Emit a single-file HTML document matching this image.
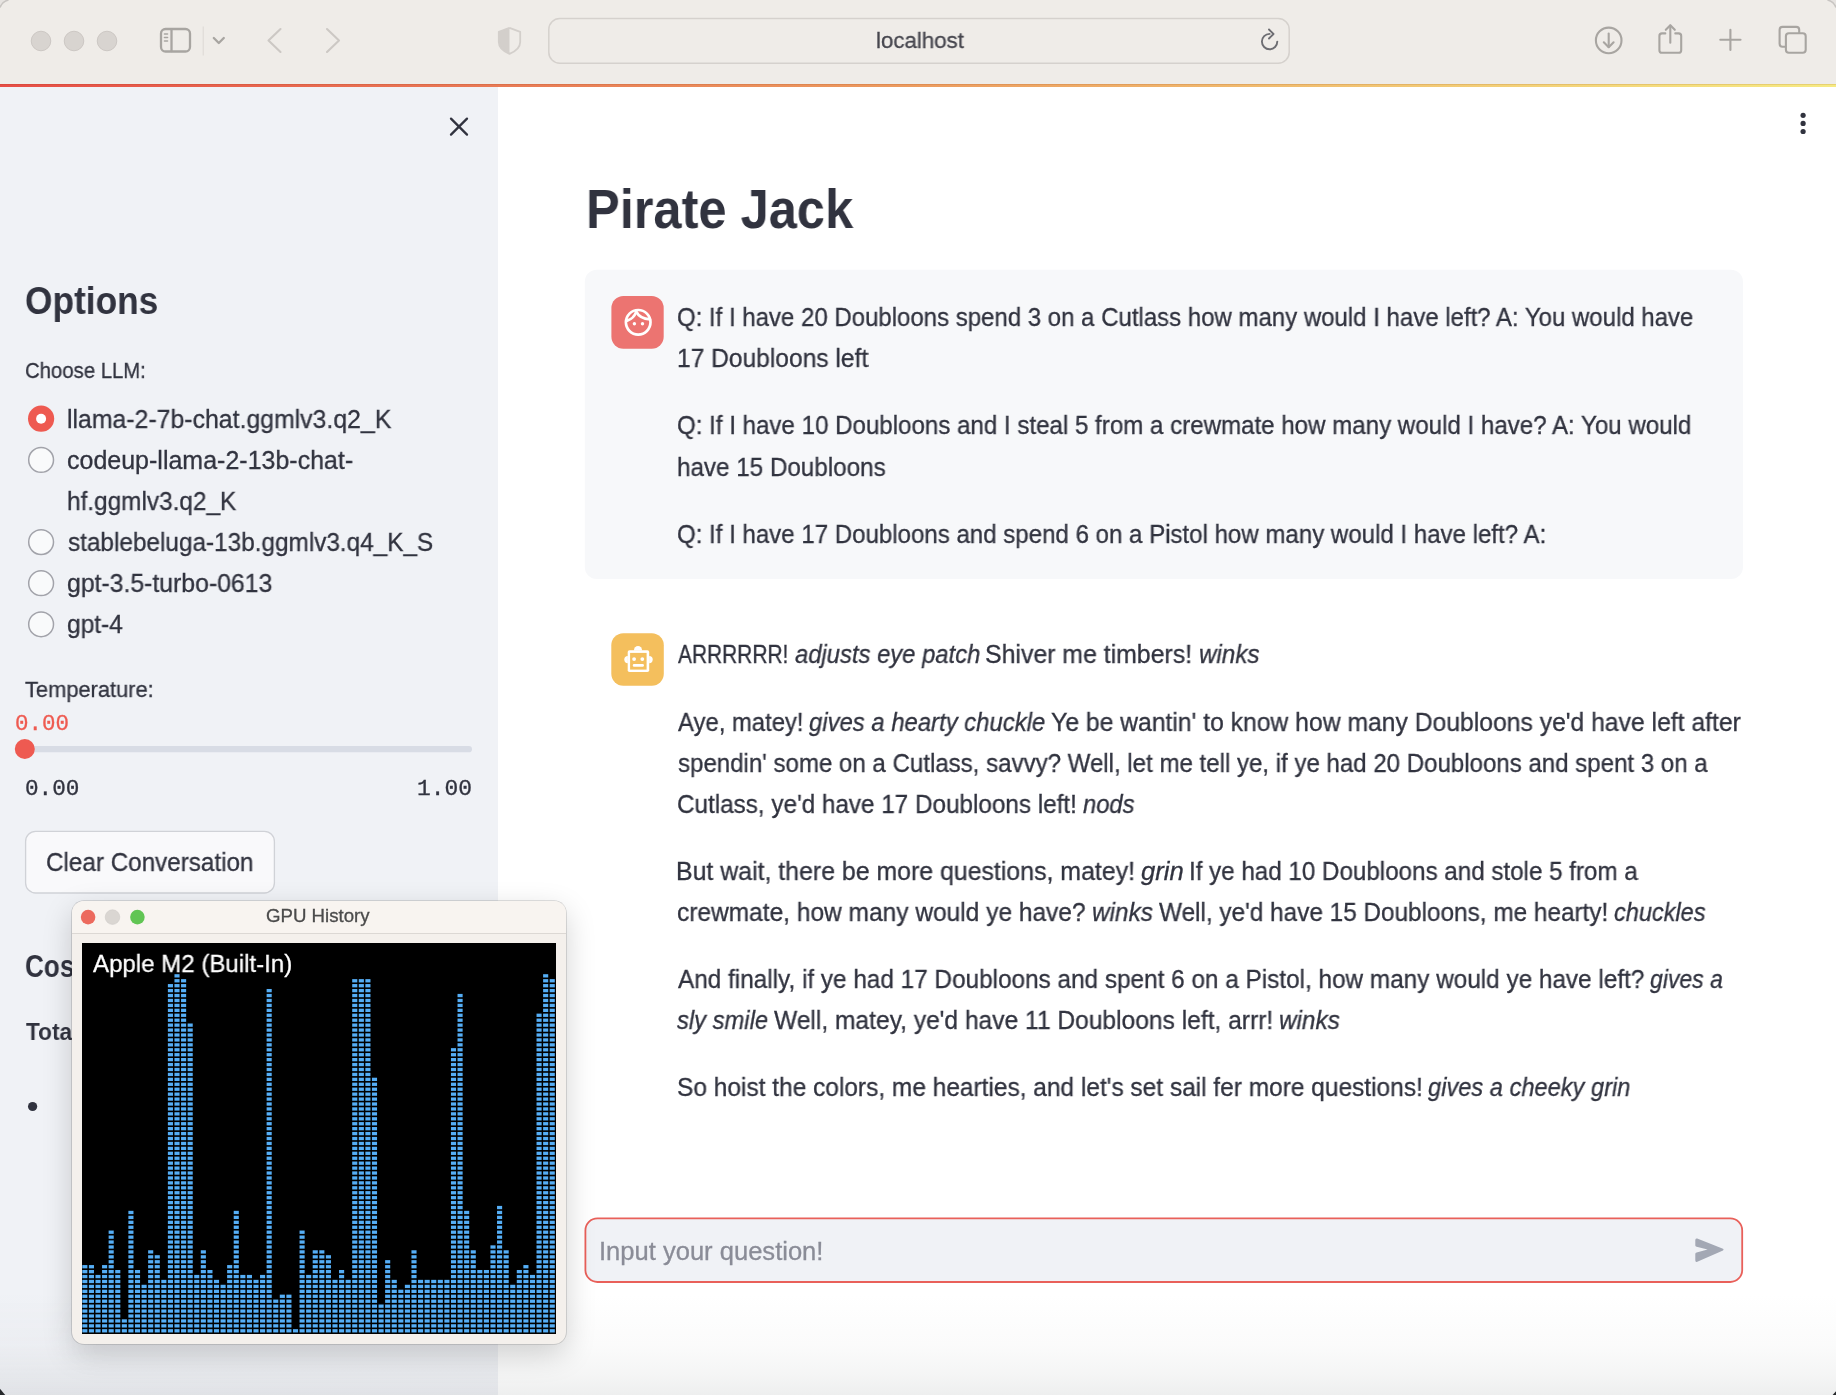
<!DOCTYPE html>
<html><head><meta charset="utf-8">
<style>
html,body{margin:0;padding:0}
body{width:1836px;height:1395px;overflow:hidden;position:relative;background:#fff;font-family:"Liberation Sans",sans-serif}
.t{position:absolute;white-space:nowrap;line-height:0;transform-origin:0 0;will-change:transform;-webkit-text-stroke:0.3px currentColor}
.t i{font-style:italic}
.abs{position:absolute}
</style></head><body>
<!-- toolbar -->
<div class="abs" style="left:0;top:0;width:1836px;height:85px;background:#EFECE8"></div>
<div class="abs" style="left:0;top:84px;width:1836px;height:3px;background:linear-gradient(90deg,#E74E46 0%,#E97A55 27%,#EC9A5E 49%,#F2C874 77%,#F6EA82 100%)"></div>
<div class="abs" style="left:0;top:84px;width:1836px;height:1px;background:rgba(120,40,0,0.12)"></div>
<svg class="abs" style="left:0;top:0" width="1836" height="84" viewBox="0 0 1836 84">
  <g fill="#D8D4D0" stroke="#C6C2BE" stroke-width="0.8">
    <circle cx="41" cy="41" r="9.8"/><circle cx="74" cy="41" r="9.8"/><circle cx="107" cy="41" r="9.8"/>
  </g>
  <g fill="none" stroke="#A8A5A1" stroke-width="2.3" stroke-linecap="round" stroke-linejoin="round">
    <rect x="161" y="29" width="29" height="22.5" rx="4.5"/>
    <line x1="171.5" y1="29.5" x2="171.5" y2="51"/>
    <line x1="164.5" y1="34" x2="167.5" y2="34" stroke-width="1.6"/>
    <line x1="164.5" y1="37.5" x2="167.5" y2="37.5" stroke-width="1.6"/>
    <line x1="164.5" y1="41" x2="167.5" y2="41" stroke-width="1.6"/>
    <polyline points="213.8,38 218.8,43 223.8,38"/>
  </g>
  <line x1="203.2" y1="26.5" x2="203.2" y2="55.5" stroke="#DCD8D4" stroke-width="1"/>
  <g fill="none" stroke="#CCC8C4" stroke-width="2.1" stroke-linecap="round" stroke-linejoin="round">
    <polyline points="280.5,29 268.5,40.5 280.5,52"/>
    <polyline points="327,29 339,40.5 327,52"/>
  </g>
  <path d="M509.5,27.8 L498.8,31.8 L498.8,42 Q498.8,49.5 509.5,53.8 Z" fill="#D3CFCB"/>
  <path d="M509.5,27.8 L520.2,31.8 L520.2,42 Q520.2,49.5 509.5,53.8 L498.8,42 Q498.8,49.5 509.5,53.8 M498.8,42 L498.8,31.8 L509.5,27.8" fill="none" stroke="#D3CFCB" stroke-width="1.8" stroke-linejoin="round"/>
  <rect x="548.8" y="18.6" width="740.4" height="44.6" rx="11" fill="#EFECE8" stroke="#D5D1CD" stroke-width="1.5"/>
  <g fill="none" stroke="#6D6D72" stroke-width="1.9" stroke-linecap="round" stroke-linejoin="round">
    <path d="M1277.3,41.6 A7.7,7.7 0 1 1 1269.6,33.9"/>
    <polyline points="1269,29.5 1273.5,34 1269,38.5"/>
  </g>
  <g fill="none" stroke="#A8A5A1" stroke-width="2.1" stroke-linecap="round" stroke-linejoin="round">
    <circle cx="1608.7" cy="40.4" r="12.8"/>
    <line x1="1608.7" y1="33.5" x2="1608.7" y2="47"/>
    <polyline points="1603.8,42.3 1608.7,47.2 1613.6,42.3"/>
    <path d="M1665.3,33.4 H1662 Q1659.4,33.4 1659.4,36 V50.2 Q1659.4,52.8 1662,52.8 H1678.6 Q1681.2,52.8 1681.2,50.2 V36 Q1681.2,33.4 1678.6,33.4 H1675.3"/>
    <line x1="1670.3" y1="25.5" x2="1670.3" y2="42.8"/>
    <polyline points="1665.8,29.8 1670.3,25.3 1674.8,29.8"/>
    <line x1="1720.3" y1="39.8" x2="1740.5" y2="39.8"/>
    <line x1="1730.4" y1="29.7" x2="1730.4" y2="50"/>
    <path d="M1785.5,46.7 H1782.5 Q1779.6,46.7 1779.6,43.8 V29.8 Q1779.6,26.9 1782.5,26.9 H1796.3 Q1799.2,26.9 1799.2,29.8 V33"/>
    <rect x="1785.9" y="33.2" width="19.8" height="19.6" rx="3"/>
  </g>
  <!-- top corners -->
  <path d="M0,0 H8.5 Q2,1.5 0,7.5 Z" fill="#E6E3E0"/>
  <path d="M8.5,0 Q2,1.5 0,7.5" fill="none" stroke="#C8C5C2" stroke-width="1.6"/>
  <path d="M1836,0 H1827.5 Q1834,1.5 1836,7.5 Z" fill="#E6E3E0"/>
  <path d="M1827.5,0 Q1834,1.5 1836,7.5" fill="none" stroke="#C8C5C2" stroke-width="1.6"/>
</svg>
<!-- sidebar -->
<div class="abs" style="left:0;top:87px;width:498px;height:1308px;background:#F0F2F6"></div>
<svg class="abs" style="left:0;top:87px" width="498" height="1308" viewBox="0 87 498 1308">
  <g stroke="#31333F" stroke-width="2.3" stroke-linecap="round">
    <line x1="451" y1="118.6" x2="467" y2="134.6"/><line x1="467" y1="118.6" x2="451" y2="134.6"/>
  </g>
  <circle cx="41.1" cy="418.7" r="13.1" fill="#EE5A51"/>
  <circle cx="41.1" cy="418.7" r="5" fill="#fff"/>
  <g fill="#F9FAFB" stroke="#A2A3AA" stroke-width="1.5">
    <circle cx="41.1" cy="459.9" r="12.4"/>
    <circle cx="41.1" cy="542.1" r="12.4"/>
    <circle cx="41.1" cy="583.2" r="12.4"/>
    <circle cx="41.1" cy="624.3" r="12.4"/>
  </g>
  <rect x="25" y="746" width="447" height="6.3" rx="3.1" fill="#D8DCE5"/>
  <circle cx="24.8" cy="749" r="10" fill="#EE5A51"/>
  <rect x="25.6" y="831.4" width="248.8" height="61.6" rx="10" fill="#F9F9FB" stroke="#D0D2D7" stroke-width="1.3"/>
  <circle cx="32.6" cy="1106.5" r="4.6" fill="#31333F"/>
</svg>
<!-- main -->
<svg class="abs" style="left:498px;top:87px" width="1338" height="1308" viewBox="498 87 1338 1308">
  <g fill="#31333F"><circle cx="1803.1" cy="115.3" r="2.6"/><circle cx="1803.1" cy="123.4" r="2.6"/><circle cx="1803.1" cy="131.5" r="2.6"/></g>
  <rect x="584.8" y="269.7" width="1158.2" height="309.3" rx="12" fill="#F7F8FA"/>
  <rect x="611.4" y="296.1" width="52.3" height="52.7" rx="12" fill="#EC7471"/>
  <g fill="none" stroke="#fff" stroke-width="2.7" stroke-linecap="round" stroke-linejoin="round">
    <circle cx="638.2" cy="322.3" r="12.3"/>
    <path d="M627.2,320.6 Q633.6,318.8 636.3,311.6 Q639.8,318.8 650,319.3"/>
  </g>
  <g fill="#fff"><circle cx="634.4" cy="323.8" r="1.7"/><circle cx="642.5" cy="323.8" r="1.7"/></g>
  <rect x="611.3" y="633.2" width="52.5" height="52.6" rx="12" fill="#F4BF5D"/>
  <g fill="#fff">
    <path d="M633.9,650.4 A4.1,4.4 0 0 1 642.1,650.4 Z"/>
    <path d="M627.9,656 A3.6,3.6 0 0 0 627.9,663.2 Z"/>
    <path d="M649.1,656 A3.6,3.6 0 0 1 649.1,663.2 Z"/>
    <rect x="627.7" y="650.2" width="21.5" height="21.8" rx="1.8"/>
  </g>
  <rect x="630.1" y="652.9" width="16.5" height="16.7" fill="#F4BF5D"/>
  <g fill="#fff"><circle cx="634.1" cy="659.1" r="1.9"/><circle cx="642.3" cy="659.1" r="1.9"/>
  <rect x="632.8" y="663.9" width="11.1" height="2.9" rx="1.2"/></g>
  <rect x="585.4" y="1218.4" width="1156.8" height="63.6" rx="12" fill="#F0F2F6" stroke="#E9605A" stroke-width="1.8"/>
  <path d="M1697.2,1238.5 Q1695.3,1237.9 1695.3,1240.2 L1695.3,1245.4 Q1695.3,1246.4 1696.6,1246.8 L1707.6,1249.6 L1696.6,1252.5 Q1695.3,1252.9 1695.3,1253.9 L1695.3,1260.3 Q1695.3,1262.6 1697.3,1261.8 L1723,1250.5 Q1724.3,1249.6 1723,1248.8 Z" fill="#A3A8B4"/>
</svg>
<div class="t" style='left:875.71px;top:41.20px;font-size:22.5px;color:#46464E;font-weight:400;font-family:"Liberation Sans";transform:scaleX(0.9904)'>localhost</div>
<div class="t" style='left:24.98px;top:301.06px;font-size:38.5px;color:#31333F;font-weight:700;font-family:"Liberation Sans";transform:scaleX(0.9167);-webkit-text-stroke:0'>Options</div>
<div class="t" style='left:24.58px;top:370.61px;font-size:22.2px;color:#31333F;font-weight:400;font-family:"Liberation Sans";transform:scaleX(0.9160)'>Choose LLM:</div>
<div class="t" style='left:67.41px;top:419.04px;font-size:25px;color:#31333F;font-weight:400;font-family:"Liberation Sans";transform:scaleX(0.9930)'>llama-2-7b-chat.ggmlv3.q2_K</div>
<div class="t" style='left:67.40px;top:459.84px;font-size:25px;color:#31333F;font-weight:400;font-family:"Liberation Sans";transform:scaleX(0.9995)'>codeup-llama-2-13b-chat-</div>
<div class="t" style='left:67.43px;top:500.74px;font-size:25px;color:#31333F;font-weight:400;font-family:"Liberation Sans";transform:scaleX(0.9743)'>hf.ggmlv3.q2_K</div>
<div class="t" style='left:68.40px;top:542.14px;font-size:25px;color:#31333F;font-weight:400;font-family:"Liberation Sans";transform:scaleX(0.9733)'>stablebeluga-13b.ggmlv3.q4_K_S</div>
<div class="t" style='left:67.41px;top:583.14px;font-size:25px;color:#31333F;font-weight:400;font-family:"Liberation Sans";transform:scaleX(0.9913)'>gpt-3.5-turbo-0613</div>
<div class="t" style='left:67.42px;top:624.04px;font-size:25px;color:#31333F;font-weight:400;font-family:"Liberation Sans";transform:scaleX(0.9808)'>gpt-4</div>
<div class="t" style='left:25.00px;top:689.61px;font-size:22.2px;color:#31333F;font-weight:400;font-family:"Liberation Sans";transform:scaleX(0.9849)'>Temperature:</div>
<div class="t" style='left:15.15px;top:723.68px;font-size:21.5px;color:#EE5A50;font-weight:400;font-family:"Liberation Mono";transform:scaleX(1.0461)'>0.00</div>
<div class="t" style='left:24.85px;top:788.78px;font-size:21.5px;color:#31333F;font-weight:400;font-family:"Liberation Mono";transform:scaleX(1.0542)'>0.00</div>
<div class="t" style='left:416.93px;top:788.78px;font-size:21.5px;color:#31333F;font-weight:400;font-family:"Liberation Mono";transform:scaleX(1.0663)'>1.00</div>
<div class="t" style='left:46.03px;top:862.14px;font-size:25px;color:#31333F;font-weight:400;font-family:"Liberation Sans";transform:scaleX(0.9694)'>Clear Conversation</div>
<div class="t" style='left:25.28px;top:966.31px;font-size:32px;color:#31333F;font-weight:700;font-family:"Liberation Sans";transform:scaleX(0.8166);-webkit-text-stroke:0'>Cos</div>
<div class="t" style='left:25.50px;top:1032.18px;font-size:24.3px;color:#31333F;font-weight:700;font-family:"Liberation Sans";transform:scaleX(0.9305);-webkit-text-stroke:0'>Tota</div>
<div class="t" style='left:586.14px;top:209.44px;font-size:55px;color:#31333F;font-weight:700;font-family:"Liberation Sans";transform:scaleX(0.9194);-webkit-text-stroke:0'>Pirate Jack</div>
<div class="t" style='left:677.34px;top:317.14px;font-size:25px;color:#31333F;font-weight:400;font-family:"Liberation Sans";transform:scaleX(0.9597)'>Q: If I have 20 Doubloons spend 3 on a Cutlass how many would I have left? A: You would have</div>
<div class="t" style='left:677.32px;top:358.14px;font-size:25px;color:#31333F;font-weight:400;font-family:"Liberation Sans";transform:scaleX(0.9823)'>17 Doubloons left</div>
<div class="t" style='left:677.34px;top:425.44px;font-size:25px;color:#31333F;font-weight:400;font-family:"Liberation Sans";transform:scaleX(0.9642)'>Q: If I have 10 Doubloons and I steal 5 from a crewmate how many would I have? A: You would</div>
<div class="t" style='left:677.33px;top:466.54px;font-size:25px;color:#31333F;font-weight:400;font-family:"Liberation Sans";transform:scaleX(0.9685)'>have 15 Doubloons</div>
<div class="t" style='left:677.34px;top:534.24px;font-size:25px;color:#31333F;font-weight:400;font-family:"Liberation Sans";transform:scaleX(0.9622)'>Q: If I have 17 Doubloons and spend 6 on a Pistol how many would I have left? A:</div>
<div class="t" style='left:678.30px;top:654.04px;font-size:25px;color:#31333F;font-weight:400;font-family:"Liberation Sans";transform:scaleX(0.8362)'>ARRRRRR!</div>
<div class="t" style='left:794.80px;top:654.04px;font-size:25px;color:#31333F;font-weight:400;font-family:"Liberation Sans";transform:scaleX(0.9522)'><i>adjusts eye patch</i></div>
<div class="t" style='left:985.31px;top:654.04px;font-size:25px;color:#31333F;font-weight:400;font-family:"Liberation Sans";transform:scaleX(0.9935)'>Shiver me timbers!</div>
<div class="t" style='left:1198.73px;top:654.04px;font-size:25px;color:#31333F;font-weight:400;font-family:"Liberation Sans";transform:scaleX(0.9687)'><i>winks</i></div>
<div class="t" style='left:678.30px;top:721.84px;font-size:25px;color:#31333F;font-weight:400;font-family:"Liberation Sans";transform:scaleX(0.9545)'>Aye, matey!</div>
<div class="t" style='left:809.40px;top:721.84px;font-size:25px;color:#31333F;font-weight:400;font-family:"Liberation Sans";transform:scaleX(0.9548)'><i>gives a hearty chuckle</i></div>
<div class="t" style='left:1051.20px;top:721.84px;font-size:25px;color:#31333F;font-weight:400;font-family:"Liberation Sans";transform:scaleX(0.9884)'>Ye be wantin&#x27; to know how many Doubloons ye&#x27;d have left after</div>
<div class="t" style='left:678.30px;top:762.84px;font-size:25px;color:#31333F;font-weight:400;font-family:"Liberation Sans";transform:scaleX(0.9621)'>spendin&#x27; some on a Cutlass, savvy? Well, let me tell ye, if ye had 20 Doubloons and spent 3 on a</div>
<div class="t" style='left:677.33px;top:803.74px;font-size:25px;color:#31333F;font-weight:400;font-family:"Liberation Sans";transform:scaleX(0.9706)'>Cutlass, ye&#x27;d have 17 Doubloons left!</div>
<div class="t" style='left:1083.10px;top:803.74px;font-size:25px;color:#31333F;font-weight:400;font-family:"Liberation Sans";transform:scaleX(0.9495)'><i>nods</i></div>
<div class="t" style='left:676.31px;top:870.84px;font-size:25px;color:#31333F;font-weight:400;font-family:"Liberation Sans";transform:scaleX(0.9948)'>But wait, there be more questions, matey!</div>
<div class="t" style='left:1140.50px;top:870.84px;font-size:25px;color:#31333F;font-weight:400;font-family:"Liberation Sans";transform:scaleX(1.0274)'><i>grin</i></div>
<div class="t" style='left:1188.87px;top:870.84px;font-size:25px;color:#31333F;font-weight:400;font-family:"Liberation Sans";transform:scaleX(0.9667)'>If ye had 10 Doubloons and stole 5 from a</div>
<div class="t" style='left:677.32px;top:911.64px;font-size:25px;color:#31333F;font-weight:400;font-family:"Liberation Sans";transform:scaleX(0.9801)'>crewmate, how many would ye have?</div>
<div class="t" style='left:1091.52px;top:911.64px;font-size:25px;color:#31333F;font-weight:400;font-family:"Liberation Sans";transform:scaleX(0.9752)'><i>winks</i></div>
<div class="t" style='left:1158.60px;top:911.64px;font-size:25px;color:#31333F;font-weight:400;font-family:"Liberation Sans";transform:scaleX(0.9735)'>Well, ye&#x27;d have 15 Doubloons, me hearty!</div>
<div class="t" style='left:1613.90px;top:911.64px;font-size:25px;color:#31333F;font-weight:400;font-family:"Liberation Sans";transform:scaleX(0.9415)'><i>chuckles</i></div>
<div class="t" style='left:678.30px;top:979.34px;font-size:25px;color:#31333F;font-weight:400;font-family:"Liberation Sans";transform:scaleX(0.9730)'>And finally, if ye had 17 Doubloons and spent 6 on a Pistol, how many would ye have left?</div>
<div class="t" style='left:1650.00px;top:979.34px;font-size:25px;color:#31333F;font-weight:400;font-family:"Liberation Sans";transform:scaleX(0.9205)'><i>gives a</i></div>
<div class="t" style='left:676.90px;top:1020.34px;font-size:25px;color:#31333F;font-weight:400;font-family:"Liberation Sans";transform:scaleX(0.9501)'><i>sly smile</i></div>
<div class="t" style='left:773.90px;top:1020.34px;font-size:25px;color:#31333F;font-weight:400;font-family:"Liberation Sans";transform:scaleX(0.9831)'>Well, matey, ye&#x27;d have 11 Doubloons left, arrr!</div>
<div class="t" style='left:1279.03px;top:1020.34px;font-size:25px;color:#31333F;font-weight:400;font-family:"Liberation Sans";transform:scaleX(0.9736)'><i>winks</i></div>
<div class="t" style='left:677.32px;top:1087.34px;font-size:25px;color:#31333F;font-weight:400;font-family:"Liberation Sans";transform:scaleX(0.9786)'>So hoist the colors, me hearties, and let&#x27;s set sail fer more questions!</div>
<div class="t" style='left:1428.40px;top:1087.34px;font-size:25px;color:#31333F;font-weight:400;font-family:"Liberation Sans";transform:scaleX(0.9460)'><i>gives a cheeky grin</i></div>
<div class="t" style='left:598.86px;top:1250.94px;font-size:25px;color:#8A8C97;font-weight:400;font-family:"Liberation Sans";transform:scaleX(1.0220)'>Input your question!</div>
<!-- bottom gradient -->
<div class="abs" style="left:498px;top:1295px;width:1338px;height:100px;background:linear-gradient(180deg,rgba(236,237,237,0) 0%,rgba(236,237,237,0.22) 50%,rgba(236,237,237,0.55) 80%,rgba(236,237,237,0.9) 100%)"></div>
<div class="abs" style="left:0;top:1295px;width:498px;height:100px;background:linear-gradient(180deg,rgba(222,224,228,0) 0%,rgba(222,224,228,0.22) 50%,rgba(222,224,228,0.55) 80%,rgba(222,224,228,0.9) 100%)"></div>
<!-- GPU window -->
<div class="abs" style="left:72px;top:901px;width:493.8px;height:443px;border-radius:12px;box-shadow:0 10px 30px rgba(0,0,0,0.18),0 0 0 0.8px rgba(0,0,0,0.16);background:#F4F0EC;overflow:hidden">
  <div class="abs" style="left:0;top:0;width:100%;height:32px;background:#F8F4F0;border-bottom:1px solid #DCD8D4"></div>
</div>
<svg class="abs" style="left:72px;top:901px" width="495" height="40" viewBox="72 901 495 40">
  <circle cx="88.1" cy="917.1" r="7.3" fill="#EC6A5E"/>
  <circle cx="112.5" cy="917.1" r="7.3" fill="#DAD6D2" stroke="#CFCBC7" stroke-width="0.6"/>
  <circle cx="137.4" cy="917.1" r="7.3" fill="#61C554"/>
</svg>
<svg style="position:absolute;left:82.0px;top:942.5px" width="474.0" height="391.5" viewBox="0 0 474.0 391.5"><rect width="474.0" height="391.5" fill="#000"/><g fill="#55AEF6"><rect x="0.30" y="386.15" width="5.1" height="3.3"/><rect x="0.30" y="381.22" width="5.1" height="3.3"/><rect x="0.30" y="376.29" width="5.1" height="3.3"/><rect x="0.30" y="371.36" width="5.1" height="3.3"/><rect x="0.30" y="366.43" width="5.1" height="3.3"/><rect x="0.30" y="361.50" width="5.1" height="3.3"/><rect x="0.30" y="356.57" width="5.1" height="3.3"/><rect x="0.30" y="351.64" width="5.1" height="3.3"/><rect x="0.30" y="346.71" width="5.1" height="3.3"/><rect x="0.30" y="341.78" width="5.1" height="3.3"/><rect x="0.30" y="336.85" width="5.1" height="3.3"/><rect x="0.30" y="331.92" width="5.1" height="3.3"/><rect x="0.30" y="326.99" width="5.1" height="3.3"/><rect x="0.30" y="322.06" width="5.1" height="3.3"/><rect x="6.88" y="386.15" width="5.1" height="3.3"/><rect x="6.88" y="381.22" width="5.1" height="3.3"/><rect x="6.88" y="376.29" width="5.1" height="3.3"/><rect x="6.88" y="371.36" width="5.1" height="3.3"/><rect x="6.88" y="366.43" width="5.1" height="3.3"/><rect x="6.88" y="361.50" width="5.1" height="3.3"/><rect x="6.88" y="356.57" width="5.1" height="3.3"/><rect x="6.88" y="351.64" width="5.1" height="3.3"/><rect x="6.88" y="346.71" width="5.1" height="3.3"/><rect x="6.88" y="341.78" width="5.1" height="3.3"/><rect x="6.88" y="336.85" width="5.1" height="3.3"/><rect x="6.88" y="331.92" width="5.1" height="3.3"/><rect x="6.88" y="326.99" width="5.1" height="3.3"/><rect x="6.88" y="322.06" width="5.1" height="3.3"/><rect x="13.47" y="386.15" width="5.1" height="3.3"/><rect x="13.47" y="381.22" width="5.1" height="3.3"/><rect x="13.47" y="376.29" width="5.1" height="3.3"/><rect x="13.47" y="371.36" width="5.1" height="3.3"/><rect x="13.47" y="366.43" width="5.1" height="3.3"/><rect x="13.47" y="361.50" width="5.1" height="3.3"/><rect x="13.47" y="356.57" width="5.1" height="3.3"/><rect x="13.47" y="351.64" width="5.1" height="3.3"/><rect x="13.47" y="346.71" width="5.1" height="3.3"/><rect x="13.47" y="341.78" width="5.1" height="3.3"/><rect x="13.47" y="336.85" width="5.1" height="3.3"/><rect x="13.47" y="331.92" width="5.1" height="3.3"/><rect x="20.05" y="386.15" width="5.1" height="3.3"/><rect x="20.05" y="381.22" width="5.1" height="3.3"/><rect x="20.05" y="376.29" width="5.1" height="3.3"/><rect x="20.05" y="371.36" width="5.1" height="3.3"/><rect x="20.05" y="366.43" width="5.1" height="3.3"/><rect x="20.05" y="361.50" width="5.1" height="3.3"/><rect x="20.05" y="356.57" width="5.1" height="3.3"/><rect x="20.05" y="351.64" width="5.1" height="3.3"/><rect x="20.05" y="346.71" width="5.1" height="3.3"/><rect x="20.05" y="341.78" width="5.1" height="3.3"/><rect x="20.05" y="336.85" width="5.1" height="3.3"/><rect x="20.05" y="331.92" width="5.1" height="3.3"/><rect x="20.05" y="326.99" width="5.1" height="3.3"/><rect x="20.05" y="322.06" width="5.1" height="3.3"/><rect x="26.63" y="386.15" width="5.1" height="3.3"/><rect x="26.63" y="381.22" width="5.1" height="3.3"/><rect x="26.63" y="376.29" width="5.1" height="3.3"/><rect x="26.63" y="371.36" width="5.1" height="3.3"/><rect x="26.63" y="366.43" width="5.1" height="3.3"/><rect x="26.63" y="361.50" width="5.1" height="3.3"/><rect x="26.63" y="356.57" width="5.1" height="3.3"/><rect x="26.63" y="351.64" width="5.1" height="3.3"/><rect x="26.63" y="346.71" width="5.1" height="3.3"/><rect x="26.63" y="341.78" width="5.1" height="3.3"/><rect x="26.63" y="336.85" width="5.1" height="3.3"/><rect x="26.63" y="331.92" width="5.1" height="3.3"/><rect x="26.63" y="326.99" width="5.1" height="3.3"/><rect x="26.63" y="322.06" width="5.1" height="3.3"/><rect x="26.63" y="317.13" width="5.1" height="3.3"/><rect x="26.63" y="312.20" width="5.1" height="3.3"/><rect x="26.63" y="307.27" width="5.1" height="3.3"/><rect x="26.63" y="302.34" width="5.1" height="3.3"/><rect x="26.63" y="297.41" width="5.1" height="3.3"/><rect x="26.63" y="292.48" width="5.1" height="3.3"/><rect x="26.63" y="287.55" width="5.1" height="3.3"/><rect x="33.22" y="386.15" width="5.1" height="3.3"/><rect x="33.22" y="381.22" width="5.1" height="3.3"/><rect x="33.22" y="376.29" width="5.1" height="3.3"/><rect x="33.22" y="371.36" width="5.1" height="3.3"/><rect x="33.22" y="366.43" width="5.1" height="3.3"/><rect x="33.22" y="361.50" width="5.1" height="3.3"/><rect x="33.22" y="356.57" width="5.1" height="3.3"/><rect x="33.22" y="351.64" width="5.1" height="3.3"/><rect x="33.22" y="346.71" width="5.1" height="3.3"/><rect x="33.22" y="341.78" width="5.1" height="3.3"/><rect x="33.22" y="336.85" width="5.1" height="3.3"/><rect x="33.22" y="331.92" width="5.1" height="3.3"/><rect x="33.22" y="326.99" width="5.1" height="3.3"/><rect x="39.80" y="386.15" width="5.1" height="3.3"/><rect x="39.80" y="381.22" width="5.1" height="3.3"/><rect x="39.80" y="376.29" width="5.1" height="3.3"/><rect x="46.38" y="386.15" width="5.1" height="3.3"/><rect x="46.38" y="381.22" width="5.1" height="3.3"/><rect x="46.38" y="376.29" width="5.1" height="3.3"/><rect x="46.38" y="371.36" width="5.1" height="3.3"/><rect x="46.38" y="366.43" width="5.1" height="3.3"/><rect x="46.38" y="361.50" width="5.1" height="3.3"/><rect x="46.38" y="356.57" width="5.1" height="3.3"/><rect x="46.38" y="351.64" width="5.1" height="3.3"/><rect x="46.38" y="346.71" width="5.1" height="3.3"/><rect x="46.38" y="341.78" width="5.1" height="3.3"/><rect x="46.38" y="336.85" width="5.1" height="3.3"/><rect x="46.38" y="331.92" width="5.1" height="3.3"/><rect x="46.38" y="326.99" width="5.1" height="3.3"/><rect x="46.38" y="322.06" width="5.1" height="3.3"/><rect x="46.38" y="317.13" width="5.1" height="3.3"/><rect x="46.38" y="312.20" width="5.1" height="3.3"/><rect x="46.38" y="307.27" width="5.1" height="3.3"/><rect x="46.38" y="302.34" width="5.1" height="3.3"/><rect x="46.38" y="297.41" width="5.1" height="3.3"/><rect x="46.38" y="292.48" width="5.1" height="3.3"/><rect x="46.38" y="287.55" width="5.1" height="3.3"/><rect x="46.38" y="282.62" width="5.1" height="3.3"/><rect x="46.38" y="277.69" width="5.1" height="3.3"/><rect x="46.38" y="272.76" width="5.1" height="3.3"/><rect x="46.38" y="267.83" width="5.1" height="3.3"/><rect x="52.96" y="386.15" width="5.1" height="3.3"/><rect x="52.96" y="381.22" width="5.1" height="3.3"/><rect x="52.96" y="376.29" width="5.1" height="3.3"/><rect x="52.96" y="371.36" width="5.1" height="3.3"/><rect x="52.96" y="366.43" width="5.1" height="3.3"/><rect x="52.96" y="361.50" width="5.1" height="3.3"/><rect x="52.96" y="356.57" width="5.1" height="3.3"/><rect x="52.96" y="351.64" width="5.1" height="3.3"/><rect x="52.96" y="346.71" width="5.1" height="3.3"/><rect x="52.96" y="341.78" width="5.1" height="3.3"/><rect x="52.96" y="336.85" width="5.1" height="3.3"/><rect x="52.96" y="331.92" width="5.1" height="3.3"/><rect x="52.96" y="326.99" width="5.1" height="3.3"/><rect x="59.55" y="386.15" width="5.1" height="3.3"/><rect x="59.55" y="381.22" width="5.1" height="3.3"/><rect x="59.55" y="376.29" width="5.1" height="3.3"/><rect x="59.55" y="371.36" width="5.1" height="3.3"/><rect x="59.55" y="366.43" width="5.1" height="3.3"/><rect x="59.55" y="361.50" width="5.1" height="3.3"/><rect x="59.55" y="356.57" width="5.1" height="3.3"/><rect x="59.55" y="351.64" width="5.1" height="3.3"/><rect x="59.55" y="346.71" width="5.1" height="3.3"/><rect x="59.55" y="341.78" width="5.1" height="3.3"/><rect x="66.13" y="386.15" width="5.1" height="3.3"/><rect x="66.13" y="381.22" width="5.1" height="3.3"/><rect x="66.13" y="376.29" width="5.1" height="3.3"/><rect x="66.13" y="371.36" width="5.1" height="3.3"/><rect x="66.13" y="366.43" width="5.1" height="3.3"/><rect x="66.13" y="361.50" width="5.1" height="3.3"/><rect x="66.13" y="356.57" width="5.1" height="3.3"/><rect x="66.13" y="351.64" width="5.1" height="3.3"/><rect x="66.13" y="346.71" width="5.1" height="3.3"/><rect x="66.13" y="341.78" width="5.1" height="3.3"/><rect x="66.13" y="336.85" width="5.1" height="3.3"/><rect x="66.13" y="331.92" width="5.1" height="3.3"/><rect x="66.13" y="326.99" width="5.1" height="3.3"/><rect x="66.13" y="322.06" width="5.1" height="3.3"/><rect x="66.13" y="317.13" width="5.1" height="3.3"/><rect x="66.13" y="312.20" width="5.1" height="3.3"/><rect x="66.13" y="307.27" width="5.1" height="3.3"/><rect x="72.71" y="386.15" width="5.1" height="3.3"/><rect x="72.71" y="381.22" width="5.1" height="3.3"/><rect x="72.71" y="376.29" width="5.1" height="3.3"/><rect x="72.71" y="371.36" width="5.1" height="3.3"/><rect x="72.71" y="366.43" width="5.1" height="3.3"/><rect x="72.71" y="361.50" width="5.1" height="3.3"/><rect x="72.71" y="356.57" width="5.1" height="3.3"/><rect x="72.71" y="351.64" width="5.1" height="3.3"/><rect x="72.71" y="346.71" width="5.1" height="3.3"/><rect x="72.71" y="341.78" width="5.1" height="3.3"/><rect x="72.71" y="336.85" width="5.1" height="3.3"/><rect x="72.71" y="331.92" width="5.1" height="3.3"/><rect x="72.71" y="326.99" width="5.1" height="3.3"/><rect x="72.71" y="322.06" width="5.1" height="3.3"/><rect x="72.71" y="317.13" width="5.1" height="3.3"/><rect x="72.71" y="312.20" width="5.1" height="3.3"/><rect x="79.30" y="386.15" width="5.1" height="3.3"/><rect x="79.30" y="381.22" width="5.1" height="3.3"/><rect x="79.30" y="376.29" width="5.1" height="3.3"/><rect x="79.30" y="371.36" width="5.1" height="3.3"/><rect x="79.30" y="366.43" width="5.1" height="3.3"/><rect x="79.30" y="361.50" width="5.1" height="3.3"/><rect x="79.30" y="356.57" width="5.1" height="3.3"/><rect x="79.30" y="351.64" width="5.1" height="3.3"/><rect x="79.30" y="346.71" width="5.1" height="3.3"/><rect x="79.30" y="341.78" width="5.1" height="3.3"/><rect x="79.30" y="336.85" width="5.1" height="3.3"/><rect x="85.88" y="386.15" width="5.1" height="3.3"/><rect x="85.88" y="381.22" width="5.1" height="3.3"/><rect x="85.88" y="376.29" width="5.1" height="3.3"/><rect x="85.88" y="371.36" width="5.1" height="3.3"/><rect x="85.88" y="366.43" width="5.1" height="3.3"/><rect x="85.88" y="361.50" width="5.1" height="3.3"/><rect x="85.88" y="356.57" width="5.1" height="3.3"/><rect x="85.88" y="351.64" width="5.1" height="3.3"/><rect x="85.88" y="346.71" width="5.1" height="3.3"/><rect x="85.88" y="341.78" width="5.1" height="3.3"/><rect x="85.88" y="336.85" width="5.1" height="3.3"/><rect x="85.88" y="331.92" width="5.1" height="3.3"/><rect x="85.88" y="326.99" width="5.1" height="3.3"/><rect x="85.88" y="322.06" width="5.1" height="3.3"/><rect x="85.88" y="317.13" width="5.1" height="3.3"/><rect x="85.88" y="312.20" width="5.1" height="3.3"/><rect x="85.88" y="307.27" width="5.1" height="3.3"/><rect x="85.88" y="302.34" width="5.1" height="3.3"/><rect x="85.88" y="297.41" width="5.1" height="3.3"/><rect x="85.88" y="292.48" width="5.1" height="3.3"/><rect x="85.88" y="287.55" width="5.1" height="3.3"/><rect x="85.88" y="282.62" width="5.1" height="3.3"/><rect x="85.88" y="277.69" width="5.1" height="3.3"/><rect x="85.88" y="272.76" width="5.1" height="3.3"/><rect x="85.88" y="267.83" width="5.1" height="3.3"/><rect x="85.88" y="262.90" width="5.1" height="3.3"/><rect x="85.88" y="257.97" width="5.1" height="3.3"/><rect x="85.88" y="253.04" width="5.1" height="3.3"/><rect x="85.88" y="248.11" width="5.1" height="3.3"/><rect x="85.88" y="243.18" width="5.1" height="3.3"/><rect x="85.88" y="238.25" width="5.1" height="3.3"/><rect x="85.88" y="233.32" width="5.1" height="3.3"/><rect x="85.88" y="228.39" width="5.1" height="3.3"/><rect x="85.88" y="223.46" width="5.1" height="3.3"/><rect x="85.88" y="218.53" width="5.1" height="3.3"/><rect x="85.88" y="213.60" width="5.1" height="3.3"/><rect x="85.88" y="208.67" width="5.1" height="3.3"/><rect x="85.88" y="203.74" width="5.1" height="3.3"/><rect x="85.88" y="198.81" width="5.1" height="3.3"/><rect x="85.88" y="193.88" width="5.1" height="3.3"/><rect x="85.88" y="188.95" width="5.1" height="3.3"/><rect x="85.88" y="184.02" width="5.1" height="3.3"/><rect x="85.88" y="179.09" width="5.1" height="3.3"/><rect x="85.88" y="174.16" width="5.1" height="3.3"/><rect x="85.88" y="169.23" width="5.1" height="3.3"/><rect x="85.88" y="164.30" width="5.1" height="3.3"/><rect x="85.88" y="159.37" width="5.1" height="3.3"/><rect x="85.88" y="154.44" width="5.1" height="3.3"/><rect x="85.88" y="149.51" width="5.1" height="3.3"/><rect x="85.88" y="144.58" width="5.1" height="3.3"/><rect x="85.88" y="139.65" width="5.1" height="3.3"/><rect x="85.88" y="134.72" width="5.1" height="3.3"/><rect x="85.88" y="129.79" width="5.1" height="3.3"/><rect x="85.88" y="124.86" width="5.1" height="3.3"/><rect x="85.88" y="119.93" width="5.1" height="3.3"/><rect x="85.88" y="115.00" width="5.1" height="3.3"/><rect x="85.88" y="110.07" width="5.1" height="3.3"/><rect x="85.88" y="105.14" width="5.1" height="3.3"/><rect x="85.88" y="100.21" width="5.1" height="3.3"/><rect x="85.88" y="95.28" width="5.1" height="3.3"/><rect x="85.88" y="90.35" width="5.1" height="3.3"/><rect x="85.88" y="85.42" width="5.1" height="3.3"/><rect x="85.88" y="80.49" width="5.1" height="3.3"/><rect x="85.88" y="75.56" width="5.1" height="3.3"/><rect x="85.88" y="70.63" width="5.1" height="3.3"/><rect x="85.88" y="65.70" width="5.1" height="3.3"/><rect x="85.88" y="60.77" width="5.1" height="3.3"/><rect x="85.88" y="55.84" width="5.1" height="3.3"/><rect x="85.88" y="50.91" width="5.1" height="3.3"/><rect x="85.88" y="45.98" width="5.1" height="3.3"/><rect x="85.88" y="41.05" width="5.1" height="3.3"/><rect x="92.46" y="386.15" width="5.1" height="3.3"/><rect x="92.46" y="381.22" width="5.1" height="3.3"/><rect x="92.46" y="376.29" width="5.1" height="3.3"/><rect x="92.46" y="371.36" width="5.1" height="3.3"/><rect x="92.46" y="366.43" width="5.1" height="3.3"/><rect x="92.46" y="361.50" width="5.1" height="3.3"/><rect x="92.46" y="356.57" width="5.1" height="3.3"/><rect x="92.46" y="351.64" width="5.1" height="3.3"/><rect x="92.46" y="346.71" width="5.1" height="3.3"/><rect x="92.46" y="341.78" width="5.1" height="3.3"/><rect x="92.46" y="336.85" width="5.1" height="3.3"/><rect x="92.46" y="331.92" width="5.1" height="3.3"/><rect x="92.46" y="326.99" width="5.1" height="3.3"/><rect x="92.46" y="322.06" width="5.1" height="3.3"/><rect x="92.46" y="317.13" width="5.1" height="3.3"/><rect x="92.46" y="312.20" width="5.1" height="3.3"/><rect x="92.46" y="307.27" width="5.1" height="3.3"/><rect x="92.46" y="302.34" width="5.1" height="3.3"/><rect x="92.46" y="297.41" width="5.1" height="3.3"/><rect x="92.46" y="292.48" width="5.1" height="3.3"/><rect x="92.46" y="287.55" width="5.1" height="3.3"/><rect x="92.46" y="282.62" width="5.1" height="3.3"/><rect x="92.46" y="277.69" width="5.1" height="3.3"/><rect x="92.46" y="272.76" width="5.1" height="3.3"/><rect x="92.46" y="267.83" width="5.1" height="3.3"/><rect x="92.46" y="262.90" width="5.1" height="3.3"/><rect x="92.46" y="257.97" width="5.1" height="3.3"/><rect x="92.46" y="253.04" width="5.1" height="3.3"/><rect x="92.46" y="248.11" width="5.1" height="3.3"/><rect x="92.46" y="243.18" width="5.1" height="3.3"/><rect x="92.46" y="238.25" width="5.1" height="3.3"/><rect x="92.46" y="233.32" width="5.1" height="3.3"/><rect x="92.46" y="228.39" width="5.1" height="3.3"/><rect x="92.46" y="223.46" width="5.1" height="3.3"/><rect x="92.46" y="218.53" width="5.1" height="3.3"/><rect x="92.46" y="213.60" width="5.1" height="3.3"/><rect x="92.46" y="208.67" width="5.1" height="3.3"/><rect x="92.46" y="203.74" width="5.1" height="3.3"/><rect x="92.46" y="198.81" width="5.1" height="3.3"/><rect x="92.46" y="193.88" width="5.1" height="3.3"/><rect x="92.46" y="188.95" width="5.1" height="3.3"/><rect x="92.46" y="184.02" width="5.1" height="3.3"/><rect x="92.46" y="179.09" width="5.1" height="3.3"/><rect x="92.46" y="174.16" width="5.1" height="3.3"/><rect x="92.46" y="169.23" width="5.1" height="3.3"/><rect x="92.46" y="164.30" width="5.1" height="3.3"/><rect x="92.46" y="159.37" width="5.1" height="3.3"/><rect x="92.46" y="154.44" width="5.1" height="3.3"/><rect x="92.46" y="149.51" width="5.1" height="3.3"/><rect x="92.46" y="144.58" width="5.1" height="3.3"/><rect x="92.46" y="139.65" width="5.1" height="3.3"/><rect x="92.46" y="134.72" width="5.1" height="3.3"/><rect x="92.46" y="129.79" width="5.1" height="3.3"/><rect x="92.46" y="124.86" width="5.1" height="3.3"/><rect x="92.46" y="119.93" width="5.1" height="3.3"/><rect x="92.46" y="115.00" width="5.1" height="3.3"/><rect x="92.46" y="110.07" width="5.1" height="3.3"/><rect x="92.46" y="105.14" width="5.1" height="3.3"/><rect x="92.46" y="100.21" width="5.1" height="3.3"/><rect x="92.46" y="95.28" width="5.1" height="3.3"/><rect x="92.46" y="90.35" width="5.1" height="3.3"/><rect x="92.46" y="85.42" width="5.1" height="3.3"/><rect x="92.46" y="80.49" width="5.1" height="3.3"/><rect x="92.46" y="75.56" width="5.1" height="3.3"/><rect x="92.46" y="70.63" width="5.1" height="3.3"/><rect x="92.46" y="65.70" width="5.1" height="3.3"/><rect x="92.46" y="60.77" width="5.1" height="3.3"/><rect x="92.46" y="55.84" width="5.1" height="3.3"/><rect x="92.46" y="50.91" width="5.1" height="3.3"/><rect x="92.46" y="45.98" width="5.1" height="3.3"/><rect x="92.46" y="41.05" width="5.1" height="3.3"/><rect x="92.46" y="36.12" width="5.1" height="3.3"/><rect x="92.46" y="31.19" width="5.1" height="3.3"/><rect x="99.05" y="386.15" width="5.1" height="3.3"/><rect x="99.05" y="381.22" width="5.1" height="3.3"/><rect x="99.05" y="376.29" width="5.1" height="3.3"/><rect x="99.05" y="371.36" width="5.1" height="3.3"/><rect x="99.05" y="366.43" width="5.1" height="3.3"/><rect x="99.05" y="361.50" width="5.1" height="3.3"/><rect x="99.05" y="356.57" width="5.1" height="3.3"/><rect x="99.05" y="351.64" width="5.1" height="3.3"/><rect x="99.05" y="346.71" width="5.1" height="3.3"/><rect x="99.05" y="341.78" width="5.1" height="3.3"/><rect x="99.05" y="336.85" width="5.1" height="3.3"/><rect x="99.05" y="331.92" width="5.1" height="3.3"/><rect x="99.05" y="326.99" width="5.1" height="3.3"/><rect x="99.05" y="322.06" width="5.1" height="3.3"/><rect x="99.05" y="317.13" width="5.1" height="3.3"/><rect x="99.05" y="312.20" width="5.1" height="3.3"/><rect x="99.05" y="307.27" width="5.1" height="3.3"/><rect x="99.05" y="302.34" width="5.1" height="3.3"/><rect x="99.05" y="297.41" width="5.1" height="3.3"/><rect x="99.05" y="292.48" width="5.1" height="3.3"/><rect x="99.05" y="287.55" width="5.1" height="3.3"/><rect x="99.05" y="282.62" width="5.1" height="3.3"/><rect x="99.05" y="277.69" width="5.1" height="3.3"/><rect x="99.05" y="272.76" width="5.1" height="3.3"/><rect x="99.05" y="267.83" width="5.1" height="3.3"/><rect x="99.05" y="262.90" width="5.1" height="3.3"/><rect x="99.05" y="257.97" width="5.1" height="3.3"/><rect x="99.05" y="253.04" width="5.1" height="3.3"/><rect x="99.05" y="248.11" width="5.1" height="3.3"/><rect x="99.05" y="243.18" width="5.1" height="3.3"/><rect x="99.05" y="238.25" width="5.1" height="3.3"/><rect x="99.05" y="233.32" width="5.1" height="3.3"/><rect x="99.05" y="228.39" width="5.1" height="3.3"/><rect x="99.05" y="223.46" width="5.1" height="3.3"/><rect x="99.05" y="218.53" width="5.1" height="3.3"/><rect x="99.05" y="213.60" width="5.1" height="3.3"/><rect x="99.05" y="208.67" width="5.1" height="3.3"/><rect x="99.05" y="203.74" width="5.1" height="3.3"/><rect x="99.05" y="198.81" width="5.1" height="3.3"/><rect x="99.05" y="193.88" width="5.1" height="3.3"/><rect x="99.05" y="188.95" width="5.1" height="3.3"/><rect x="99.05" y="184.02" width="5.1" height="3.3"/><rect x="99.05" y="179.09" width="5.1" height="3.3"/><rect x="99.05" y="174.16" width="5.1" height="3.3"/><rect x="99.05" y="169.23" width="5.1" height="3.3"/><rect x="99.05" y="164.30" width="5.1" height="3.3"/><rect x="99.05" y="159.37" width="5.1" height="3.3"/><rect x="99.05" y="154.44" width="5.1" height="3.3"/><rect x="99.05" y="149.51" width="5.1" height="3.3"/><rect x="99.05" y="144.58" width="5.1" height="3.3"/><rect x="99.05" y="139.65" width="5.1" height="3.3"/><rect x="99.05" y="134.72" width="5.1" height="3.3"/><rect x="99.05" y="129.79" width="5.1" height="3.3"/><rect x="99.05" y="124.86" width="5.1" height="3.3"/><rect x="99.05" y="119.93" width="5.1" height="3.3"/><rect x="99.05" y="115.00" width="5.1" height="3.3"/><rect x="99.05" y="110.07" width="5.1" height="3.3"/><rect x="99.05" y="105.14" width="5.1" height="3.3"/><rect x="99.05" y="100.21" width="5.1" height="3.3"/><rect x="99.05" y="95.28" width="5.1" height="3.3"/><rect x="99.05" y="90.35" width="5.1" height="3.3"/><rect x="99.05" y="85.42" width="5.1" height="3.3"/><rect x="99.05" y="80.49" width="5.1" height="3.3"/><rect x="99.05" y="75.56" width="5.1" height="3.3"/><rect x="99.05" y="70.63" width="5.1" height="3.3"/><rect x="99.05" y="65.70" width="5.1" height="3.3"/><rect x="99.05" y="60.77" width="5.1" height="3.3"/><rect x="99.05" y="55.84" width="5.1" height="3.3"/><rect x="99.05" y="50.91" width="5.1" height="3.3"/><rect x="99.05" y="45.98" width="5.1" height="3.3"/><rect x="99.05" y="41.05" width="5.1" height="3.3"/><rect x="99.05" y="36.12" width="5.1" height="3.3"/><rect x="105.63" y="386.15" width="5.1" height="3.3"/><rect x="105.63" y="381.22" width="5.1" height="3.3"/><rect x="105.63" y="376.29" width="5.1" height="3.3"/><rect x="105.63" y="371.36" width="5.1" height="3.3"/><rect x="105.63" y="366.43" width="5.1" height="3.3"/><rect x="105.63" y="361.50" width="5.1" height="3.3"/><rect x="105.63" y="356.57" width="5.1" height="3.3"/><rect x="105.63" y="351.64" width="5.1" height="3.3"/><rect x="105.63" y="346.71" width="5.1" height="3.3"/><rect x="105.63" y="341.78" width="5.1" height="3.3"/><rect x="105.63" y="336.85" width="5.1" height="3.3"/><rect x="105.63" y="331.92" width="5.1" height="3.3"/><rect x="105.63" y="326.99" width="5.1" height="3.3"/><rect x="105.63" y="322.06" width="5.1" height="3.3"/><rect x="105.63" y="317.13" width="5.1" height="3.3"/><rect x="105.63" y="312.20" width="5.1" height="3.3"/><rect x="105.63" y="307.27" width="5.1" height="3.3"/><rect x="105.63" y="302.34" width="5.1" height="3.3"/><rect x="105.63" y="297.41" width="5.1" height="3.3"/><rect x="105.63" y="292.48" width="5.1" height="3.3"/><rect x="105.63" y="287.55" width="5.1" height="3.3"/><rect x="105.63" y="282.62" width="5.1" height="3.3"/><rect x="105.63" y="277.69" width="5.1" height="3.3"/><rect x="105.63" y="272.76" width="5.1" height="3.3"/><rect x="105.63" y="267.83" width="5.1" height="3.3"/><rect x="105.63" y="262.90" width="5.1" height="3.3"/><rect x="105.63" y="257.97" width="5.1" height="3.3"/><rect x="105.63" y="253.04" width="5.1" height="3.3"/><rect x="105.63" y="248.11" width="5.1" height="3.3"/><rect x="105.63" y="243.18" width="5.1" height="3.3"/><rect x="105.63" y="238.25" width="5.1" height="3.3"/><rect x="105.63" y="233.32" width="5.1" height="3.3"/><rect x="105.63" y="228.39" width="5.1" height="3.3"/><rect x="105.63" y="223.46" width="5.1" height="3.3"/><rect x="105.63" y="218.53" width="5.1" height="3.3"/><rect x="105.63" y="213.60" width="5.1" height="3.3"/><rect x="105.63" y="208.67" width="5.1" height="3.3"/><rect x="105.63" y="203.74" width="5.1" height="3.3"/><rect x="105.63" y="198.81" width="5.1" height="3.3"/><rect x="105.63" y="193.88" width="5.1" height="3.3"/><rect x="105.63" y="188.95" width="5.1" height="3.3"/><rect x="105.63" y="184.02" width="5.1" height="3.3"/><rect x="105.63" y="179.09" width="5.1" height="3.3"/><rect x="105.63" y="174.16" width="5.1" height="3.3"/><rect x="105.63" y="169.23" width="5.1" height="3.3"/><rect x="105.63" y="164.30" width="5.1" height="3.3"/><rect x="105.63" y="159.37" width="5.1" height="3.3"/><rect x="105.63" y="154.44" width="5.1" height="3.3"/><rect x="105.63" y="149.51" width="5.1" height="3.3"/><rect x="105.63" y="144.58" width="5.1" height="3.3"/><rect x="105.63" y="139.65" width="5.1" height="3.3"/><rect x="105.63" y="134.72" width="5.1" height="3.3"/><rect x="105.63" y="129.79" width="5.1" height="3.3"/><rect x="105.63" y="124.86" width="5.1" height="3.3"/><rect x="105.63" y="119.93" width="5.1" height="3.3"/><rect x="105.63" y="115.00" width="5.1" height="3.3"/><rect x="105.63" y="110.07" width="5.1" height="3.3"/><rect x="105.63" y="105.14" width="5.1" height="3.3"/><rect x="105.63" y="100.21" width="5.1" height="3.3"/><rect x="105.63" y="95.28" width="5.1" height="3.3"/><rect x="105.63" y="90.35" width="5.1" height="3.3"/><rect x="105.63" y="85.42" width="5.1" height="3.3"/><rect x="105.63" y="80.49" width="5.1" height="3.3"/><rect x="112.21" y="386.15" width="5.1" height="3.3"/><rect x="112.21" y="381.22" width="5.1" height="3.3"/><rect x="112.21" y="376.29" width="5.1" height="3.3"/><rect x="112.21" y="371.36" width="5.1" height="3.3"/><rect x="112.21" y="366.43" width="5.1" height="3.3"/><rect x="112.21" y="361.50" width="5.1" height="3.3"/><rect x="112.21" y="356.57" width="5.1" height="3.3"/><rect x="112.21" y="351.64" width="5.1" height="3.3"/><rect x="112.21" y="346.71" width="5.1" height="3.3"/><rect x="112.21" y="341.78" width="5.1" height="3.3"/><rect x="112.21" y="336.85" width="5.1" height="3.3"/><rect x="112.21" y="331.92" width="5.1" height="3.3"/><rect x="118.79" y="386.15" width="5.1" height="3.3"/><rect x="118.79" y="381.22" width="5.1" height="3.3"/><rect x="118.79" y="376.29" width="5.1" height="3.3"/><rect x="118.79" y="371.36" width="5.1" height="3.3"/><rect x="118.79" y="366.43" width="5.1" height="3.3"/><rect x="118.79" y="361.50" width="5.1" height="3.3"/><rect x="118.79" y="356.57" width="5.1" height="3.3"/><rect x="118.79" y="351.64" width="5.1" height="3.3"/><rect x="118.79" y="346.71" width="5.1" height="3.3"/><rect x="118.79" y="341.78" width="5.1" height="3.3"/><rect x="118.79" y="336.85" width="5.1" height="3.3"/><rect x="118.79" y="331.92" width="5.1" height="3.3"/><rect x="118.79" y="326.99" width="5.1" height="3.3"/><rect x="118.79" y="322.06" width="5.1" height="3.3"/><rect x="118.79" y="317.13" width="5.1" height="3.3"/><rect x="118.79" y="312.20" width="5.1" height="3.3"/><rect x="118.79" y="307.27" width="5.1" height="3.3"/><rect x="125.38" y="386.15" width="5.1" height="3.3"/><rect x="125.38" y="381.22" width="5.1" height="3.3"/><rect x="125.38" y="376.29" width="5.1" height="3.3"/><rect x="125.38" y="371.36" width="5.1" height="3.3"/><rect x="125.38" y="366.43" width="5.1" height="3.3"/><rect x="125.38" y="361.50" width="5.1" height="3.3"/><rect x="125.38" y="356.57" width="5.1" height="3.3"/><rect x="125.38" y="351.64" width="5.1" height="3.3"/><rect x="125.38" y="346.71" width="5.1" height="3.3"/><rect x="125.38" y="341.78" width="5.1" height="3.3"/><rect x="125.38" y="336.85" width="5.1" height="3.3"/><rect x="125.38" y="331.92" width="5.1" height="3.3"/><rect x="125.38" y="326.99" width="5.1" height="3.3"/><rect x="131.96" y="386.15" width="5.1" height="3.3"/><rect x="131.96" y="381.22" width="5.1" height="3.3"/><rect x="131.96" y="376.29" width="5.1" height="3.3"/><rect x="131.96" y="371.36" width="5.1" height="3.3"/><rect x="131.96" y="366.43" width="5.1" height="3.3"/><rect x="131.96" y="361.50" width="5.1" height="3.3"/><rect x="131.96" y="356.57" width="5.1" height="3.3"/><rect x="131.96" y="351.64" width="5.1" height="3.3"/><rect x="131.96" y="346.71" width="5.1" height="3.3"/><rect x="131.96" y="341.78" width="5.1" height="3.3"/><rect x="131.96" y="336.85" width="5.1" height="3.3"/><rect x="138.54" y="386.15" width="5.1" height="3.3"/><rect x="138.54" y="381.22" width="5.1" height="3.3"/><rect x="138.54" y="376.29" width="5.1" height="3.3"/><rect x="138.54" y="371.36" width="5.1" height="3.3"/><rect x="138.54" y="366.43" width="5.1" height="3.3"/><rect x="138.54" y="361.50" width="5.1" height="3.3"/><rect x="138.54" y="356.57" width="5.1" height="3.3"/><rect x="138.54" y="351.64" width="5.1" height="3.3"/><rect x="138.54" y="346.71" width="5.1" height="3.3"/><rect x="138.54" y="341.78" width="5.1" height="3.3"/><rect x="145.13" y="386.15" width="5.1" height="3.3"/><rect x="145.13" y="381.22" width="5.1" height="3.3"/><rect x="145.13" y="376.29" width="5.1" height="3.3"/><rect x="145.13" y="371.36" width="5.1" height="3.3"/><rect x="145.13" y="366.43" width="5.1" height="3.3"/><rect x="145.13" y="361.50" width="5.1" height="3.3"/><rect x="145.13" y="356.57" width="5.1" height="3.3"/><rect x="145.13" y="351.64" width="5.1" height="3.3"/><rect x="145.13" y="346.71" width="5.1" height="3.3"/><rect x="145.13" y="341.78" width="5.1" height="3.3"/><rect x="145.13" y="336.85" width="5.1" height="3.3"/><rect x="145.13" y="331.92" width="5.1" height="3.3"/><rect x="145.13" y="326.99" width="5.1" height="3.3"/><rect x="145.13" y="322.06" width="5.1" height="3.3"/><rect x="151.71" y="386.15" width="5.1" height="3.3"/><rect x="151.71" y="381.22" width="5.1" height="3.3"/><rect x="151.71" y="376.29" width="5.1" height="3.3"/><rect x="151.71" y="371.36" width="5.1" height="3.3"/><rect x="151.71" y="366.43" width="5.1" height="3.3"/><rect x="151.71" y="361.50" width="5.1" height="3.3"/><rect x="151.71" y="356.57" width="5.1" height="3.3"/><rect x="151.71" y="351.64" width="5.1" height="3.3"/><rect x="151.71" y="346.71" width="5.1" height="3.3"/><rect x="151.71" y="341.78" width="5.1" height="3.3"/><rect x="151.71" y="336.85" width="5.1" height="3.3"/><rect x="151.71" y="331.92" width="5.1" height="3.3"/><rect x="151.71" y="326.99" width="5.1" height="3.3"/><rect x="151.71" y="322.06" width="5.1" height="3.3"/><rect x="151.71" y="317.13" width="5.1" height="3.3"/><rect x="151.71" y="312.20" width="5.1" height="3.3"/><rect x="151.71" y="307.27" width="5.1" height="3.3"/><rect x="151.71" y="302.34" width="5.1" height="3.3"/><rect x="151.71" y="297.41" width="5.1" height="3.3"/><rect x="151.71" y="292.48" width="5.1" height="3.3"/><rect x="151.71" y="287.55" width="5.1" height="3.3"/><rect x="151.71" y="282.62" width="5.1" height="3.3"/><rect x="151.71" y="277.69" width="5.1" height="3.3"/><rect x="151.71" y="272.76" width="5.1" height="3.3"/><rect x="151.71" y="267.83" width="5.1" height="3.3"/><rect x="158.29" y="386.15" width="5.1" height="3.3"/><rect x="158.29" y="381.22" width="5.1" height="3.3"/><rect x="158.29" y="376.29" width="5.1" height="3.3"/><rect x="158.29" y="371.36" width="5.1" height="3.3"/><rect x="158.29" y="366.43" width="5.1" height="3.3"/><rect x="158.29" y="361.50" width="5.1" height="3.3"/><rect x="158.29" y="356.57" width="5.1" height="3.3"/><rect x="158.29" y="351.64" width="5.1" height="3.3"/><rect x="158.29" y="346.71" width="5.1" height="3.3"/><rect x="158.29" y="341.78" width="5.1" height="3.3"/><rect x="158.29" y="336.85" width="5.1" height="3.3"/><rect x="158.29" y="331.92" width="5.1" height="3.3"/><rect x="164.88" y="386.15" width="5.1" height="3.3"/><rect x="164.88" y="381.22" width="5.1" height="3.3"/><rect x="164.88" y="376.29" width="5.1" height="3.3"/><rect x="164.88" y="371.36" width="5.1" height="3.3"/><rect x="164.88" y="366.43" width="5.1" height="3.3"/><rect x="164.88" y="361.50" width="5.1" height="3.3"/><rect x="164.88" y="356.57" width="5.1" height="3.3"/><rect x="164.88" y="351.64" width="5.1" height="3.3"/><rect x="164.88" y="346.71" width="5.1" height="3.3"/><rect x="164.88" y="341.78" width="5.1" height="3.3"/><rect x="164.88" y="336.85" width="5.1" height="3.3"/><rect x="164.88" y="331.92" width="5.1" height="3.3"/><rect x="171.46" y="386.15" width="5.1" height="3.3"/><rect x="171.46" y="381.22" width="5.1" height="3.3"/><rect x="171.46" y="376.29" width="5.1" height="3.3"/><rect x="171.46" y="371.36" width="5.1" height="3.3"/><rect x="171.46" y="366.43" width="5.1" height="3.3"/><rect x="171.46" y="361.50" width="5.1" height="3.3"/><rect x="171.46" y="356.57" width="5.1" height="3.3"/><rect x="171.46" y="351.64" width="5.1" height="3.3"/><rect x="171.46" y="346.71" width="5.1" height="3.3"/><rect x="171.46" y="341.78" width="5.1" height="3.3"/><rect x="171.46" y="336.85" width="5.1" height="3.3"/><rect x="178.04" y="386.15" width="5.1" height="3.3"/><rect x="178.04" y="381.22" width="5.1" height="3.3"/><rect x="178.04" y="376.29" width="5.1" height="3.3"/><rect x="178.04" y="371.36" width="5.1" height="3.3"/><rect x="178.04" y="366.43" width="5.1" height="3.3"/><rect x="178.04" y="361.50" width="5.1" height="3.3"/><rect x="178.04" y="356.57" width="5.1" height="3.3"/><rect x="178.04" y="351.64" width="5.1" height="3.3"/><rect x="178.04" y="346.71" width="5.1" height="3.3"/><rect x="178.04" y="341.78" width="5.1" height="3.3"/><rect x="178.04" y="336.85" width="5.1" height="3.3"/><rect x="178.04" y="331.92" width="5.1" height="3.3"/><rect x="184.62" y="386.15" width="5.1" height="3.3"/><rect x="184.62" y="381.22" width="5.1" height="3.3"/><rect x="184.62" y="376.29" width="5.1" height="3.3"/><rect x="184.62" y="371.36" width="5.1" height="3.3"/><rect x="184.62" y="366.43" width="5.1" height="3.3"/><rect x="184.62" y="361.50" width="5.1" height="3.3"/><rect x="184.62" y="356.57" width="5.1" height="3.3"/><rect x="184.62" y="351.64" width="5.1" height="3.3"/><rect x="184.62" y="346.71" width="5.1" height="3.3"/><rect x="184.62" y="341.78" width="5.1" height="3.3"/><rect x="184.62" y="336.85" width="5.1" height="3.3"/><rect x="184.62" y="331.92" width="5.1" height="3.3"/><rect x="184.62" y="326.99" width="5.1" height="3.3"/><rect x="184.62" y="322.06" width="5.1" height="3.3"/><rect x="184.62" y="317.13" width="5.1" height="3.3"/><rect x="184.62" y="312.20" width="5.1" height="3.3"/><rect x="184.62" y="307.27" width="5.1" height="3.3"/><rect x="184.62" y="302.34" width="5.1" height="3.3"/><rect x="184.62" y="297.41" width="5.1" height="3.3"/><rect x="184.62" y="292.48" width="5.1" height="3.3"/><rect x="184.62" y="287.55" width="5.1" height="3.3"/><rect x="184.62" y="282.62" width="5.1" height="3.3"/><rect x="184.62" y="277.69" width="5.1" height="3.3"/><rect x="184.62" y="272.76" width="5.1" height="3.3"/><rect x="184.62" y="267.83" width="5.1" height="3.3"/><rect x="184.62" y="262.90" width="5.1" height="3.3"/><rect x="184.62" y="257.97" width="5.1" height="3.3"/><rect x="184.62" y="253.04" width="5.1" height="3.3"/><rect x="184.62" y="248.11" width="5.1" height="3.3"/><rect x="184.62" y="243.18" width="5.1" height="3.3"/><rect x="184.62" y="238.25" width="5.1" height="3.3"/><rect x="184.62" y="233.32" width="5.1" height="3.3"/><rect x="184.62" y="228.39" width="5.1" height="3.3"/><rect x="184.62" y="223.46" width="5.1" height="3.3"/><rect x="184.62" y="218.53" width="5.1" height="3.3"/><rect x="184.62" y="213.60" width="5.1" height="3.3"/><rect x="184.62" y="208.67" width="5.1" height="3.3"/><rect x="184.62" y="203.74" width="5.1" height="3.3"/><rect x="184.62" y="198.81" width="5.1" height="3.3"/><rect x="184.62" y="193.88" width="5.1" height="3.3"/><rect x="184.62" y="188.95" width="5.1" height="3.3"/><rect x="184.62" y="184.02" width="5.1" height="3.3"/><rect x="184.62" y="179.09" width="5.1" height="3.3"/><rect x="184.62" y="174.16" width="5.1" height="3.3"/><rect x="184.62" y="169.23" width="5.1" height="3.3"/><rect x="184.62" y="164.30" width="5.1" height="3.3"/><rect x="184.62" y="159.37" width="5.1" height="3.3"/><rect x="184.62" y="154.44" width="5.1" height="3.3"/><rect x="184.62" y="149.51" width="5.1" height="3.3"/><rect x="184.62" y="144.58" width="5.1" height="3.3"/><rect x="184.62" y="139.65" width="5.1" height="3.3"/><rect x="184.62" y="134.72" width="5.1" height="3.3"/><rect x="184.62" y="129.79" width="5.1" height="3.3"/><rect x="184.62" y="124.86" width="5.1" height="3.3"/><rect x="184.62" y="119.93" width="5.1" height="3.3"/><rect x="184.62" y="115.00" width="5.1" height="3.3"/><rect x="184.62" y="110.07" width="5.1" height="3.3"/><rect x="184.62" y="105.14" width="5.1" height="3.3"/><rect x="184.62" y="100.21" width="5.1" height="3.3"/><rect x="184.62" y="95.28" width="5.1" height="3.3"/><rect x="184.62" y="90.35" width="5.1" height="3.3"/><rect x="184.62" y="85.42" width="5.1" height="3.3"/><rect x="184.62" y="80.49" width="5.1" height="3.3"/><rect x="184.62" y="75.56" width="5.1" height="3.3"/><rect x="184.62" y="70.63" width="5.1" height="3.3"/><rect x="184.62" y="65.70" width="5.1" height="3.3"/><rect x="184.62" y="60.77" width="5.1" height="3.3"/><rect x="184.62" y="55.84" width="5.1" height="3.3"/><rect x="184.62" y="50.91" width="5.1" height="3.3"/><rect x="184.62" y="45.98" width="5.1" height="3.3"/><rect x="191.21" y="386.15" width="5.1" height="3.3"/><rect x="191.21" y="381.22" width="5.1" height="3.3"/><rect x="191.21" y="376.29" width="5.1" height="3.3"/><rect x="191.21" y="371.36" width="5.1" height="3.3"/><rect x="191.21" y="366.43" width="5.1" height="3.3"/><rect x="191.21" y="361.50" width="5.1" height="3.3"/><rect x="191.21" y="356.57" width="5.1" height="3.3"/><rect x="197.79" y="386.15" width="5.1" height="3.3"/><rect x="197.79" y="381.22" width="5.1" height="3.3"/><rect x="197.79" y="376.29" width="5.1" height="3.3"/><rect x="197.79" y="371.36" width="5.1" height="3.3"/><rect x="197.79" y="366.43" width="5.1" height="3.3"/><rect x="197.79" y="361.50" width="5.1" height="3.3"/><rect x="197.79" y="356.57" width="5.1" height="3.3"/><rect x="197.79" y="351.64" width="5.1" height="3.3"/><rect x="204.37" y="386.15" width="5.1" height="3.3"/><rect x="204.37" y="381.22" width="5.1" height="3.3"/><rect x="204.37" y="376.29" width="5.1" height="3.3"/><rect x="204.37" y="371.36" width="5.1" height="3.3"/><rect x="204.37" y="366.43" width="5.1" height="3.3"/><rect x="204.37" y="361.50" width="5.1" height="3.3"/><rect x="204.37" y="356.57" width="5.1" height="3.3"/><rect x="204.37" y="351.64" width="5.1" height="3.3"/><rect x="210.96" y="386.15" width="5.1" height="3.3"/><rect x="217.54" y="386.15" width="5.1" height="3.3"/><rect x="217.54" y="381.22" width="5.1" height="3.3"/><rect x="217.54" y="376.29" width="5.1" height="3.3"/><rect x="217.54" y="371.36" width="5.1" height="3.3"/><rect x="217.54" y="366.43" width="5.1" height="3.3"/><rect x="217.54" y="361.50" width="5.1" height="3.3"/><rect x="217.54" y="356.57" width="5.1" height="3.3"/><rect x="217.54" y="351.64" width="5.1" height="3.3"/><rect x="217.54" y="346.71" width="5.1" height="3.3"/><rect x="217.54" y="341.78" width="5.1" height="3.3"/><rect x="217.54" y="336.85" width="5.1" height="3.3"/><rect x="217.54" y="331.92" width="5.1" height="3.3"/><rect x="217.54" y="326.99" width="5.1" height="3.3"/><rect x="217.54" y="322.06" width="5.1" height="3.3"/><rect x="217.54" y="317.13" width="5.1" height="3.3"/><rect x="217.54" y="312.20" width="5.1" height="3.3"/><rect x="217.54" y="307.27" width="5.1" height="3.3"/><rect x="217.54" y="302.34" width="5.1" height="3.3"/><rect x="217.54" y="297.41" width="5.1" height="3.3"/><rect x="217.54" y="292.48" width="5.1" height="3.3"/><rect x="217.54" y="287.55" width="5.1" height="3.3"/><rect x="224.12" y="386.15" width="5.1" height="3.3"/><rect x="224.12" y="381.22" width="5.1" height="3.3"/><rect x="224.12" y="376.29" width="5.1" height="3.3"/><rect x="224.12" y="371.36" width="5.1" height="3.3"/><rect x="224.12" y="366.43" width="5.1" height="3.3"/><rect x="224.12" y="361.50" width="5.1" height="3.3"/><rect x="224.12" y="356.57" width="5.1" height="3.3"/><rect x="224.12" y="351.64" width="5.1" height="3.3"/><rect x="224.12" y="346.71" width="5.1" height="3.3"/><rect x="224.12" y="341.78" width="5.1" height="3.3"/><rect x="224.12" y="336.85" width="5.1" height="3.3"/><rect x="224.12" y="331.92" width="5.1" height="3.3"/><rect x="230.70" y="386.15" width="5.1" height="3.3"/><rect x="230.70" y="381.22" width="5.1" height="3.3"/><rect x="230.70" y="376.29" width="5.1" height="3.3"/><rect x="230.70" y="371.36" width="5.1" height="3.3"/><rect x="230.70" y="366.43" width="5.1" height="3.3"/><rect x="230.70" y="361.50" width="5.1" height="3.3"/><rect x="230.70" y="356.57" width="5.1" height="3.3"/><rect x="230.70" y="351.64" width="5.1" height="3.3"/><rect x="230.70" y="346.71" width="5.1" height="3.3"/><rect x="230.70" y="341.78" width="5.1" height="3.3"/><rect x="230.70" y="336.85" width="5.1" height="3.3"/><rect x="230.70" y="331.92" width="5.1" height="3.3"/><rect x="230.70" y="326.99" width="5.1" height="3.3"/><rect x="230.70" y="322.06" width="5.1" height="3.3"/><rect x="230.70" y="317.13" width="5.1" height="3.3"/><rect x="230.70" y="312.20" width="5.1" height="3.3"/><rect x="230.70" y="307.27" width="5.1" height="3.3"/><rect x="237.29" y="386.15" width="5.1" height="3.3"/><rect x="237.29" y="381.22" width="5.1" height="3.3"/><rect x="237.29" y="376.29" width="5.1" height="3.3"/><rect x="237.29" y="371.36" width="5.1" height="3.3"/><rect x="237.29" y="366.43" width="5.1" height="3.3"/><rect x="237.29" y="361.50" width="5.1" height="3.3"/><rect x="237.29" y="356.57" width="5.1" height="3.3"/><rect x="237.29" y="351.64" width="5.1" height="3.3"/><rect x="237.29" y="346.71" width="5.1" height="3.3"/><rect x="237.29" y="341.78" width="5.1" height="3.3"/><rect x="237.29" y="336.85" width="5.1" height="3.3"/><rect x="237.29" y="331.92" width="5.1" height="3.3"/><rect x="237.29" y="326.99" width="5.1" height="3.3"/><rect x="237.29" y="322.06" width="5.1" height="3.3"/><rect x="237.29" y="317.13" width="5.1" height="3.3"/><rect x="237.29" y="312.20" width="5.1" height="3.3"/><rect x="237.29" y="307.27" width="5.1" height="3.3"/><rect x="243.87" y="386.15" width="5.1" height="3.3"/><rect x="243.87" y="381.22" width="5.1" height="3.3"/><rect x="243.87" y="376.29" width="5.1" height="3.3"/><rect x="243.87" y="371.36" width="5.1" height="3.3"/><rect x="243.87" y="366.43" width="5.1" height="3.3"/><rect x="243.87" y="361.50" width="5.1" height="3.3"/><rect x="243.87" y="356.57" width="5.1" height="3.3"/><rect x="243.87" y="351.64" width="5.1" height="3.3"/><rect x="243.87" y="346.71" width="5.1" height="3.3"/><rect x="243.87" y="341.78" width="5.1" height="3.3"/><rect x="243.87" y="336.85" width="5.1" height="3.3"/><rect x="243.87" y="331.92" width="5.1" height="3.3"/><rect x="243.87" y="326.99" width="5.1" height="3.3"/><rect x="243.87" y="322.06" width="5.1" height="3.3"/><rect x="243.87" y="317.13" width="5.1" height="3.3"/><rect x="243.87" y="312.20" width="5.1" height="3.3"/><rect x="250.45" y="386.15" width="5.1" height="3.3"/><rect x="250.45" y="381.22" width="5.1" height="3.3"/><rect x="250.45" y="376.29" width="5.1" height="3.3"/><rect x="250.45" y="371.36" width="5.1" height="3.3"/><rect x="250.45" y="366.43" width="5.1" height="3.3"/><rect x="250.45" y="361.50" width="5.1" height="3.3"/><rect x="250.45" y="356.57" width="5.1" height="3.3"/><rect x="250.45" y="351.64" width="5.1" height="3.3"/><rect x="250.45" y="346.71" width="5.1" height="3.3"/><rect x="250.45" y="341.78" width="5.1" height="3.3"/><rect x="250.45" y="336.85" width="5.1" height="3.3"/><rect x="257.04" y="386.15" width="5.1" height="3.3"/><rect x="257.04" y="381.22" width="5.1" height="3.3"/><rect x="257.04" y="376.29" width="5.1" height="3.3"/><rect x="257.04" y="371.36" width="5.1" height="3.3"/><rect x="257.04" y="366.43" width="5.1" height="3.3"/><rect x="257.04" y="361.50" width="5.1" height="3.3"/><rect x="257.04" y="356.57" width="5.1" height="3.3"/><rect x="257.04" y="351.64" width="5.1" height="3.3"/><rect x="257.04" y="346.71" width="5.1" height="3.3"/><rect x="257.04" y="341.78" width="5.1" height="3.3"/><rect x="257.04" y="336.85" width="5.1" height="3.3"/><rect x="257.04" y="331.92" width="5.1" height="3.3"/><rect x="257.04" y="326.99" width="5.1" height="3.3"/><rect x="263.62" y="386.15" width="5.1" height="3.3"/><rect x="263.62" y="381.22" width="5.1" height="3.3"/><rect x="263.62" y="376.29" width="5.1" height="3.3"/><rect x="263.62" y="371.36" width="5.1" height="3.3"/><rect x="263.62" y="366.43" width="5.1" height="3.3"/><rect x="263.62" y="361.50" width="5.1" height="3.3"/><rect x="263.62" y="356.57" width="5.1" height="3.3"/><rect x="263.62" y="351.64" width="5.1" height="3.3"/><rect x="263.62" y="346.71" width="5.1" height="3.3"/><rect x="263.62" y="341.78" width="5.1" height="3.3"/><rect x="263.62" y="336.85" width="5.1" height="3.3"/><rect x="270.20" y="386.15" width="5.1" height="3.3"/><rect x="270.20" y="381.22" width="5.1" height="3.3"/><rect x="270.20" y="376.29" width="5.1" height="3.3"/><rect x="270.20" y="371.36" width="5.1" height="3.3"/><rect x="270.20" y="366.43" width="5.1" height="3.3"/><rect x="270.20" y="361.50" width="5.1" height="3.3"/><rect x="270.20" y="356.57" width="5.1" height="3.3"/><rect x="270.20" y="351.64" width="5.1" height="3.3"/><rect x="270.20" y="346.71" width="5.1" height="3.3"/><rect x="270.20" y="341.78" width="5.1" height="3.3"/><rect x="270.20" y="336.85" width="5.1" height="3.3"/><rect x="270.20" y="331.92" width="5.1" height="3.3"/><rect x="270.20" y="326.99" width="5.1" height="3.3"/><rect x="270.20" y="322.06" width="5.1" height="3.3"/><rect x="270.20" y="317.13" width="5.1" height="3.3"/><rect x="270.20" y="312.20" width="5.1" height="3.3"/><rect x="270.20" y="307.27" width="5.1" height="3.3"/><rect x="270.20" y="302.34" width="5.1" height="3.3"/><rect x="270.20" y="297.41" width="5.1" height="3.3"/><rect x="270.20" y="292.48" width="5.1" height="3.3"/><rect x="270.20" y="287.55" width="5.1" height="3.3"/><rect x="270.20" y="282.62" width="5.1" height="3.3"/><rect x="270.20" y="277.69" width="5.1" height="3.3"/><rect x="270.20" y="272.76" width="5.1" height="3.3"/><rect x="270.20" y="267.83" width="5.1" height="3.3"/><rect x="270.20" y="262.90" width="5.1" height="3.3"/><rect x="270.20" y="257.97" width="5.1" height="3.3"/><rect x="270.20" y="253.04" width="5.1" height="3.3"/><rect x="270.20" y="248.11" width="5.1" height="3.3"/><rect x="270.20" y="243.18" width="5.1" height="3.3"/><rect x="270.20" y="238.25" width="5.1" height="3.3"/><rect x="270.20" y="233.32" width="5.1" height="3.3"/><rect x="270.20" y="228.39" width="5.1" height="3.3"/><rect x="270.20" y="223.46" width="5.1" height="3.3"/><rect x="270.20" y="218.53" width="5.1" height="3.3"/><rect x="270.20" y="213.60" width="5.1" height="3.3"/><rect x="270.20" y="208.67" width="5.1" height="3.3"/><rect x="270.20" y="203.74" width="5.1" height="3.3"/><rect x="270.20" y="198.81" width="5.1" height="3.3"/><rect x="270.20" y="193.88" width="5.1" height="3.3"/><rect x="270.20" y="188.95" width="5.1" height="3.3"/><rect x="270.20" y="184.02" width="5.1" height="3.3"/><rect x="270.20" y="179.09" width="5.1" height="3.3"/><rect x="270.20" y="174.16" width="5.1" height="3.3"/><rect x="270.20" y="169.23" width="5.1" height="3.3"/><rect x="270.20" y="164.30" width="5.1" height="3.3"/><rect x="270.20" y="159.37" width="5.1" height="3.3"/><rect x="270.20" y="154.44" width="5.1" height="3.3"/><rect x="270.20" y="149.51" width="5.1" height="3.3"/><rect x="270.20" y="144.58" width="5.1" height="3.3"/><rect x="270.20" y="139.65" width="5.1" height="3.3"/><rect x="270.20" y="134.72" width="5.1" height="3.3"/><rect x="270.20" y="129.79" width="5.1" height="3.3"/><rect x="270.20" y="124.86" width="5.1" height="3.3"/><rect x="270.20" y="119.93" width="5.1" height="3.3"/><rect x="270.20" y="115.00" width="5.1" height="3.3"/><rect x="270.20" y="110.07" width="5.1" height="3.3"/><rect x="270.20" y="105.14" width="5.1" height="3.3"/><rect x="270.20" y="100.21" width="5.1" height="3.3"/><rect x="270.20" y="95.28" width="5.1" height="3.3"/><rect x="270.20" y="90.35" width="5.1" height="3.3"/><rect x="270.20" y="85.42" width="5.1" height="3.3"/><rect x="270.20" y="80.49" width="5.1" height="3.3"/><rect x="270.20" y="75.56" width="5.1" height="3.3"/><rect x="270.20" y="70.63" width="5.1" height="3.3"/><rect x="270.20" y="65.70" width="5.1" height="3.3"/><rect x="270.20" y="60.77" width="5.1" height="3.3"/><rect x="270.20" y="55.84" width="5.1" height="3.3"/><rect x="270.20" y="50.91" width="5.1" height="3.3"/><rect x="270.20" y="45.98" width="5.1" height="3.3"/><rect x="270.20" y="41.05" width="5.1" height="3.3"/><rect x="270.20" y="36.12" width="5.1" height="3.3"/><rect x="276.79" y="386.15" width="5.1" height="3.3"/><rect x="276.79" y="381.22" width="5.1" height="3.3"/><rect x="276.79" y="376.29" width="5.1" height="3.3"/><rect x="276.79" y="371.36" width="5.1" height="3.3"/><rect x="276.79" y="366.43" width="5.1" height="3.3"/><rect x="276.79" y="361.50" width="5.1" height="3.3"/><rect x="276.79" y="356.57" width="5.1" height="3.3"/><rect x="276.79" y="351.64" width="5.1" height="3.3"/><rect x="276.79" y="346.71" width="5.1" height="3.3"/><rect x="276.79" y="341.78" width="5.1" height="3.3"/><rect x="276.79" y="336.85" width="5.1" height="3.3"/><rect x="276.79" y="331.92" width="5.1" height="3.3"/><rect x="276.79" y="326.99" width="5.1" height="3.3"/><rect x="276.79" y="322.06" width="5.1" height="3.3"/><rect x="276.79" y="317.13" width="5.1" height="3.3"/><rect x="276.79" y="312.20" width="5.1" height="3.3"/><rect x="276.79" y="307.27" width="5.1" height="3.3"/><rect x="276.79" y="302.34" width="5.1" height="3.3"/><rect x="276.79" y="297.41" width="5.1" height="3.3"/><rect x="276.79" y="292.48" width="5.1" height="3.3"/><rect x="276.79" y="287.55" width="5.1" height="3.3"/><rect x="276.79" y="282.62" width="5.1" height="3.3"/><rect x="276.79" y="277.69" width="5.1" height="3.3"/><rect x="276.79" y="272.76" width="5.1" height="3.3"/><rect x="276.79" y="267.83" width="5.1" height="3.3"/><rect x="276.79" y="262.90" width="5.1" height="3.3"/><rect x="276.79" y="257.97" width="5.1" height="3.3"/><rect x="276.79" y="253.04" width="5.1" height="3.3"/><rect x="276.79" y="248.11" width="5.1" height="3.3"/><rect x="276.79" y="243.18" width="5.1" height="3.3"/><rect x="276.79" y="238.25" width="5.1" height="3.3"/><rect x="276.79" y="233.32" width="5.1" height="3.3"/><rect x="276.79" y="228.39" width="5.1" height="3.3"/><rect x="276.79" y="223.46" width="5.1" height="3.3"/><rect x="276.79" y="218.53" width="5.1" height="3.3"/><rect x="276.79" y="213.60" width="5.1" height="3.3"/><rect x="276.79" y="208.67" width="5.1" height="3.3"/><rect x="276.79" y="203.74" width="5.1" height="3.3"/><rect x="276.79" y="198.81" width="5.1" height="3.3"/><rect x="276.79" y="193.88" width="5.1" height="3.3"/><rect x="276.79" y="188.95" width="5.1" height="3.3"/><rect x="276.79" y="184.02" width="5.1" height="3.3"/><rect x="276.79" y="179.09" width="5.1" height="3.3"/><rect x="276.79" y="174.16" width="5.1" height="3.3"/><rect x="276.79" y="169.23" width="5.1" height="3.3"/><rect x="276.79" y="164.30" width="5.1" height="3.3"/><rect x="276.79" y="159.37" width="5.1" height="3.3"/><rect x="276.79" y="154.44" width="5.1" height="3.3"/><rect x="276.79" y="149.51" width="5.1" height="3.3"/><rect x="276.79" y="144.58" width="5.1" height="3.3"/><rect x="276.79" y="139.65" width="5.1" height="3.3"/><rect x="276.79" y="134.72" width="5.1" height="3.3"/><rect x="276.79" y="129.79" width="5.1" height="3.3"/><rect x="276.79" y="124.86" width="5.1" height="3.3"/><rect x="276.79" y="119.93" width="5.1" height="3.3"/><rect x="276.79" y="115.00" width="5.1" height="3.3"/><rect x="276.79" y="110.07" width="5.1" height="3.3"/><rect x="276.79" y="105.14" width="5.1" height="3.3"/><rect x="276.79" y="100.21" width="5.1" height="3.3"/><rect x="276.79" y="95.28" width="5.1" height="3.3"/><rect x="276.79" y="90.35" width="5.1" height="3.3"/><rect x="276.79" y="85.42" width="5.1" height="3.3"/><rect x="276.79" y="80.49" width="5.1" height="3.3"/><rect x="276.79" y="75.56" width="5.1" height="3.3"/><rect x="276.79" y="70.63" width="5.1" height="3.3"/><rect x="276.79" y="65.70" width="5.1" height="3.3"/><rect x="276.79" y="60.77" width="5.1" height="3.3"/><rect x="276.79" y="55.84" width="5.1" height="3.3"/><rect x="276.79" y="50.91" width="5.1" height="3.3"/><rect x="276.79" y="45.98" width="5.1" height="3.3"/><rect x="276.79" y="41.05" width="5.1" height="3.3"/><rect x="276.79" y="36.12" width="5.1" height="3.3"/><rect x="283.37" y="386.15" width="5.1" height="3.3"/><rect x="283.37" y="381.22" width="5.1" height="3.3"/><rect x="283.37" y="376.29" width="5.1" height="3.3"/><rect x="283.37" y="371.36" width="5.1" height="3.3"/><rect x="283.37" y="366.43" width="5.1" height="3.3"/><rect x="283.37" y="361.50" width="5.1" height="3.3"/><rect x="283.37" y="356.57" width="5.1" height="3.3"/><rect x="283.37" y="351.64" width="5.1" height="3.3"/><rect x="283.37" y="346.71" width="5.1" height="3.3"/><rect x="283.37" y="341.78" width="5.1" height="3.3"/><rect x="283.37" y="336.85" width="5.1" height="3.3"/><rect x="283.37" y="331.92" width="5.1" height="3.3"/><rect x="283.37" y="326.99" width="5.1" height="3.3"/><rect x="283.37" y="322.06" width="5.1" height="3.3"/><rect x="283.37" y="317.13" width="5.1" height="3.3"/><rect x="283.37" y="312.20" width="5.1" height="3.3"/><rect x="283.37" y="307.27" width="5.1" height="3.3"/><rect x="283.37" y="302.34" width="5.1" height="3.3"/><rect x="283.37" y="297.41" width="5.1" height="3.3"/><rect x="283.37" y="292.48" width="5.1" height="3.3"/><rect x="283.37" y="287.55" width="5.1" height="3.3"/><rect x="283.37" y="282.62" width="5.1" height="3.3"/><rect x="283.37" y="277.69" width="5.1" height="3.3"/><rect x="283.37" y="272.76" width="5.1" height="3.3"/><rect x="283.37" y="267.83" width="5.1" height="3.3"/><rect x="283.37" y="262.90" width="5.1" height="3.3"/><rect x="283.37" y="257.97" width="5.1" height="3.3"/><rect x="283.37" y="253.04" width="5.1" height="3.3"/><rect x="283.37" y="248.11" width="5.1" height="3.3"/><rect x="283.37" y="243.18" width="5.1" height="3.3"/><rect x="283.37" y="238.25" width="5.1" height="3.3"/><rect x="283.37" y="233.32" width="5.1" height="3.3"/><rect x="283.37" y="228.39" width="5.1" height="3.3"/><rect x="283.37" y="223.46" width="5.1" height="3.3"/><rect x="283.37" y="218.53" width="5.1" height="3.3"/><rect x="283.37" y="213.60" width="5.1" height="3.3"/><rect x="283.37" y="208.67" width="5.1" height="3.3"/><rect x="283.37" y="203.74" width="5.1" height="3.3"/><rect x="283.37" y="198.81" width="5.1" height="3.3"/><rect x="283.37" y="193.88" width="5.1" height="3.3"/><rect x="283.37" y="188.95" width="5.1" height="3.3"/><rect x="283.37" y="184.02" width="5.1" height="3.3"/><rect x="283.37" y="179.09" width="5.1" height="3.3"/><rect x="283.37" y="174.16" width="5.1" height="3.3"/><rect x="283.37" y="169.23" width="5.1" height="3.3"/><rect x="283.37" y="164.30" width="5.1" height="3.3"/><rect x="283.37" y="159.37" width="5.1" height="3.3"/><rect x="283.37" y="154.44" width="5.1" height="3.3"/><rect x="283.37" y="149.51" width="5.1" height="3.3"/><rect x="283.37" y="144.58" width="5.1" height="3.3"/><rect x="283.37" y="139.65" width="5.1" height="3.3"/><rect x="283.37" y="134.72" width="5.1" height="3.3"/><rect x="283.37" y="129.79" width="5.1" height="3.3"/><rect x="283.37" y="124.86" width="5.1" height="3.3"/><rect x="283.37" y="119.93" width="5.1" height="3.3"/><rect x="283.37" y="115.00" width="5.1" height="3.3"/><rect x="283.37" y="110.07" width="5.1" height="3.3"/><rect x="283.37" y="105.14" width="5.1" height="3.3"/><rect x="283.37" y="100.21" width="5.1" height="3.3"/><rect x="283.37" y="95.28" width="5.1" height="3.3"/><rect x="283.37" y="90.35" width="5.1" height="3.3"/><rect x="283.37" y="85.42" width="5.1" height="3.3"/><rect x="283.37" y="80.49" width="5.1" height="3.3"/><rect x="283.37" y="75.56" width="5.1" height="3.3"/><rect x="283.37" y="70.63" width="5.1" height="3.3"/><rect x="283.37" y="65.70" width="5.1" height="3.3"/><rect x="283.37" y="60.77" width="5.1" height="3.3"/><rect x="283.37" y="55.84" width="5.1" height="3.3"/><rect x="283.37" y="50.91" width="5.1" height="3.3"/><rect x="283.37" y="45.98" width="5.1" height="3.3"/><rect x="283.37" y="41.05" width="5.1" height="3.3"/><rect x="283.37" y="36.12" width="5.1" height="3.3"/><rect x="289.95" y="386.15" width="5.1" height="3.3"/><rect x="289.95" y="381.22" width="5.1" height="3.3"/><rect x="289.95" y="376.29" width="5.1" height="3.3"/><rect x="289.95" y="371.36" width="5.1" height="3.3"/><rect x="289.95" y="366.43" width="5.1" height="3.3"/><rect x="289.95" y="361.50" width="5.1" height="3.3"/><rect x="289.95" y="356.57" width="5.1" height="3.3"/><rect x="289.95" y="351.64" width="5.1" height="3.3"/><rect x="289.95" y="346.71" width="5.1" height="3.3"/><rect x="289.95" y="341.78" width="5.1" height="3.3"/><rect x="289.95" y="336.85" width="5.1" height="3.3"/><rect x="289.95" y="331.92" width="5.1" height="3.3"/><rect x="289.95" y="326.99" width="5.1" height="3.3"/><rect x="289.95" y="322.06" width="5.1" height="3.3"/><rect x="289.95" y="317.13" width="5.1" height="3.3"/><rect x="289.95" y="312.20" width="5.1" height="3.3"/><rect x="289.95" y="307.27" width="5.1" height="3.3"/><rect x="289.95" y="302.34" width="5.1" height="3.3"/><rect x="289.95" y="297.41" width="5.1" height="3.3"/><rect x="289.95" y="292.48" width="5.1" height="3.3"/><rect x="289.95" y="287.55" width="5.1" height="3.3"/><rect x="289.95" y="282.62" width="5.1" height="3.3"/><rect x="289.95" y="277.69" width="5.1" height="3.3"/><rect x="289.95" y="272.76" width="5.1" height="3.3"/><rect x="289.95" y="267.83" width="5.1" height="3.3"/><rect x="289.95" y="262.90" width="5.1" height="3.3"/><rect x="289.95" y="257.97" width="5.1" height="3.3"/><rect x="289.95" y="253.04" width="5.1" height="3.3"/><rect x="289.95" y="248.11" width="5.1" height="3.3"/><rect x="289.95" y="243.18" width="5.1" height="3.3"/><rect x="289.95" y="238.25" width="5.1" height="3.3"/><rect x="289.95" y="233.32" width="5.1" height="3.3"/><rect x="289.95" y="228.39" width="5.1" height="3.3"/><rect x="289.95" y="223.46" width="5.1" height="3.3"/><rect x="289.95" y="218.53" width="5.1" height="3.3"/><rect x="289.95" y="213.60" width="5.1" height="3.3"/><rect x="289.95" y="208.67" width="5.1" height="3.3"/><rect x="289.95" y="203.74" width="5.1" height="3.3"/><rect x="289.95" y="198.81" width="5.1" height="3.3"/><rect x="289.95" y="193.88" width="5.1" height="3.3"/><rect x="289.95" y="188.95" width="5.1" height="3.3"/><rect x="289.95" y="184.02" width="5.1" height="3.3"/><rect x="289.95" y="179.09" width="5.1" height="3.3"/><rect x="289.95" y="174.16" width="5.1" height="3.3"/><rect x="289.95" y="169.23" width="5.1" height="3.3"/><rect x="289.95" y="164.30" width="5.1" height="3.3"/><rect x="289.95" y="159.37" width="5.1" height="3.3"/><rect x="289.95" y="154.44" width="5.1" height="3.3"/><rect x="289.95" y="149.51" width="5.1" height="3.3"/><rect x="289.95" y="144.58" width="5.1" height="3.3"/><rect x="289.95" y="139.65" width="5.1" height="3.3"/><rect x="289.95" y="134.72" width="5.1" height="3.3"/><rect x="296.54" y="386.15" width="5.1" height="3.3"/><rect x="296.54" y="381.22" width="5.1" height="3.3"/><rect x="296.54" y="376.29" width="5.1" height="3.3"/><rect x="296.54" y="371.36" width="5.1" height="3.3"/><rect x="296.54" y="366.43" width="5.1" height="3.3"/><rect x="296.54" y="361.50" width="5.1" height="3.3"/><rect x="303.12" y="386.15" width="5.1" height="3.3"/><rect x="303.12" y="381.22" width="5.1" height="3.3"/><rect x="303.12" y="376.29" width="5.1" height="3.3"/><rect x="303.12" y="371.36" width="5.1" height="3.3"/><rect x="303.12" y="366.43" width="5.1" height="3.3"/><rect x="303.12" y="361.50" width="5.1" height="3.3"/><rect x="303.12" y="356.57" width="5.1" height="3.3"/><rect x="303.12" y="351.64" width="5.1" height="3.3"/><rect x="303.12" y="346.71" width="5.1" height="3.3"/><rect x="303.12" y="341.78" width="5.1" height="3.3"/><rect x="303.12" y="336.85" width="5.1" height="3.3"/><rect x="303.12" y="331.92" width="5.1" height="3.3"/><rect x="303.12" y="326.99" width="5.1" height="3.3"/><rect x="303.12" y="322.06" width="5.1" height="3.3"/><rect x="303.12" y="317.13" width="5.1" height="3.3"/><rect x="309.70" y="386.15" width="5.1" height="3.3"/><rect x="309.70" y="381.22" width="5.1" height="3.3"/><rect x="309.70" y="376.29" width="5.1" height="3.3"/><rect x="309.70" y="371.36" width="5.1" height="3.3"/><rect x="309.70" y="366.43" width="5.1" height="3.3"/><rect x="309.70" y="361.50" width="5.1" height="3.3"/><rect x="309.70" y="356.57" width="5.1" height="3.3"/><rect x="309.70" y="351.64" width="5.1" height="3.3"/><rect x="309.70" y="346.71" width="5.1" height="3.3"/><rect x="309.70" y="341.78" width="5.1" height="3.3"/><rect x="309.70" y="336.85" width="5.1" height="3.3"/><rect x="316.28" y="386.15" width="5.1" height="3.3"/><rect x="316.28" y="381.22" width="5.1" height="3.3"/><rect x="316.28" y="376.29" width="5.1" height="3.3"/><rect x="316.28" y="371.36" width="5.1" height="3.3"/><rect x="316.28" y="366.43" width="5.1" height="3.3"/><rect x="316.28" y="361.50" width="5.1" height="3.3"/><rect x="316.28" y="356.57" width="5.1" height="3.3"/><rect x="316.28" y="351.64" width="5.1" height="3.3"/><rect x="316.28" y="346.71" width="5.1" height="3.3"/><rect x="322.87" y="386.15" width="5.1" height="3.3"/><rect x="322.87" y="381.22" width="5.1" height="3.3"/><rect x="322.87" y="376.29" width="5.1" height="3.3"/><rect x="322.87" y="371.36" width="5.1" height="3.3"/><rect x="322.87" y="366.43" width="5.1" height="3.3"/><rect x="322.87" y="361.50" width="5.1" height="3.3"/><rect x="322.87" y="356.57" width="5.1" height="3.3"/><rect x="322.87" y="351.64" width="5.1" height="3.3"/><rect x="322.87" y="346.71" width="5.1" height="3.3"/><rect x="322.87" y="341.78" width="5.1" height="3.3"/><rect x="329.45" y="386.15" width="5.1" height="3.3"/><rect x="329.45" y="381.22" width="5.1" height="3.3"/><rect x="329.45" y="376.29" width="5.1" height="3.3"/><rect x="329.45" y="371.36" width="5.1" height="3.3"/><rect x="329.45" y="366.43" width="5.1" height="3.3"/><rect x="329.45" y="361.50" width="5.1" height="3.3"/><rect x="329.45" y="356.57" width="5.1" height="3.3"/><rect x="329.45" y="351.64" width="5.1" height="3.3"/><rect x="329.45" y="346.71" width="5.1" height="3.3"/><rect x="329.45" y="341.78" width="5.1" height="3.3"/><rect x="329.45" y="336.85" width="5.1" height="3.3"/><rect x="329.45" y="331.92" width="5.1" height="3.3"/><rect x="329.45" y="326.99" width="5.1" height="3.3"/><rect x="329.45" y="322.06" width="5.1" height="3.3"/><rect x="329.45" y="317.13" width="5.1" height="3.3"/><rect x="329.45" y="312.20" width="5.1" height="3.3"/><rect x="329.45" y="307.27" width="5.1" height="3.3"/><rect x="336.03" y="386.15" width="5.1" height="3.3"/><rect x="336.03" y="381.22" width="5.1" height="3.3"/><rect x="336.03" y="376.29" width="5.1" height="3.3"/><rect x="336.03" y="371.36" width="5.1" height="3.3"/><rect x="336.03" y="366.43" width="5.1" height="3.3"/><rect x="336.03" y="361.50" width="5.1" height="3.3"/><rect x="336.03" y="356.57" width="5.1" height="3.3"/><rect x="336.03" y="351.64" width="5.1" height="3.3"/><rect x="336.03" y="346.71" width="5.1" height="3.3"/><rect x="336.03" y="341.78" width="5.1" height="3.3"/><rect x="336.03" y="336.85" width="5.1" height="3.3"/><rect x="342.62" y="386.15" width="5.1" height="3.3"/><rect x="342.62" y="381.22" width="5.1" height="3.3"/><rect x="342.62" y="376.29" width="5.1" height="3.3"/><rect x="342.62" y="371.36" width="5.1" height="3.3"/><rect x="342.62" y="366.43" width="5.1" height="3.3"/><rect x="342.62" y="361.50" width="5.1" height="3.3"/><rect x="342.62" y="356.57" width="5.1" height="3.3"/><rect x="342.62" y="351.64" width="5.1" height="3.3"/><rect x="342.62" y="346.71" width="5.1" height="3.3"/><rect x="342.62" y="341.78" width="5.1" height="3.3"/><rect x="342.62" y="336.85" width="5.1" height="3.3"/><rect x="349.20" y="386.15" width="5.1" height="3.3"/><rect x="349.20" y="381.22" width="5.1" height="3.3"/><rect x="349.20" y="376.29" width="5.1" height="3.3"/><rect x="349.20" y="371.36" width="5.1" height="3.3"/><rect x="349.20" y="366.43" width="5.1" height="3.3"/><rect x="349.20" y="361.50" width="5.1" height="3.3"/><rect x="349.20" y="356.57" width="5.1" height="3.3"/><rect x="349.20" y="351.64" width="5.1" height="3.3"/><rect x="349.20" y="346.71" width="5.1" height="3.3"/><rect x="349.20" y="341.78" width="5.1" height="3.3"/><rect x="349.20" y="336.85" width="5.1" height="3.3"/><rect x="355.78" y="386.15" width="5.1" height="3.3"/><rect x="355.78" y="381.22" width="5.1" height="3.3"/><rect x="355.78" y="376.29" width="5.1" height="3.3"/><rect x="355.78" y="371.36" width="5.1" height="3.3"/><rect x="355.78" y="366.43" width="5.1" height="3.3"/><rect x="355.78" y="361.50" width="5.1" height="3.3"/><rect x="355.78" y="356.57" width="5.1" height="3.3"/><rect x="355.78" y="351.64" width="5.1" height="3.3"/><rect x="355.78" y="346.71" width="5.1" height="3.3"/><rect x="355.78" y="341.78" width="5.1" height="3.3"/><rect x="355.78" y="336.85" width="5.1" height="3.3"/><rect x="362.37" y="386.15" width="5.1" height="3.3"/><rect x="362.37" y="381.22" width="5.1" height="3.3"/><rect x="362.37" y="376.29" width="5.1" height="3.3"/><rect x="362.37" y="371.36" width="5.1" height="3.3"/><rect x="362.37" y="366.43" width="5.1" height="3.3"/><rect x="362.37" y="361.50" width="5.1" height="3.3"/><rect x="362.37" y="356.57" width="5.1" height="3.3"/><rect x="362.37" y="351.64" width="5.1" height="3.3"/><rect x="362.37" y="346.71" width="5.1" height="3.3"/><rect x="362.37" y="341.78" width="5.1" height="3.3"/><rect x="362.37" y="336.85" width="5.1" height="3.3"/><rect x="368.95" y="386.15" width="5.1" height="3.3"/><rect x="368.95" y="381.22" width="5.1" height="3.3"/><rect x="368.95" y="376.29" width="5.1" height="3.3"/><rect x="368.95" y="371.36" width="5.1" height="3.3"/><rect x="368.95" y="366.43" width="5.1" height="3.3"/><rect x="368.95" y="361.50" width="5.1" height="3.3"/><rect x="368.95" y="356.57" width="5.1" height="3.3"/><rect x="368.95" y="351.64" width="5.1" height="3.3"/><rect x="368.95" y="346.71" width="5.1" height="3.3"/><rect x="368.95" y="341.78" width="5.1" height="3.3"/><rect x="368.95" y="336.85" width="5.1" height="3.3"/><rect x="368.95" y="331.92" width="5.1" height="3.3"/><rect x="368.95" y="326.99" width="5.1" height="3.3"/><rect x="368.95" y="322.06" width="5.1" height="3.3"/><rect x="368.95" y="317.13" width="5.1" height="3.3"/><rect x="368.95" y="312.20" width="5.1" height="3.3"/><rect x="368.95" y="307.27" width="5.1" height="3.3"/><rect x="368.95" y="302.34" width="5.1" height="3.3"/><rect x="368.95" y="297.41" width="5.1" height="3.3"/><rect x="368.95" y="292.48" width="5.1" height="3.3"/><rect x="368.95" y="287.55" width="5.1" height="3.3"/><rect x="368.95" y="282.62" width="5.1" height="3.3"/><rect x="368.95" y="277.69" width="5.1" height="3.3"/><rect x="368.95" y="272.76" width="5.1" height="3.3"/><rect x="368.95" y="267.83" width="5.1" height="3.3"/><rect x="368.95" y="262.90" width="5.1" height="3.3"/><rect x="368.95" y="257.97" width="5.1" height="3.3"/><rect x="368.95" y="253.04" width="5.1" height="3.3"/><rect x="368.95" y="248.11" width="5.1" height="3.3"/><rect x="368.95" y="243.18" width="5.1" height="3.3"/><rect x="368.95" y="238.25" width="5.1" height="3.3"/><rect x="368.95" y="233.32" width="5.1" height="3.3"/><rect x="368.95" y="228.39" width="5.1" height="3.3"/><rect x="368.95" y="223.46" width="5.1" height="3.3"/><rect x="368.95" y="218.53" width="5.1" height="3.3"/><rect x="368.95" y="213.60" width="5.1" height="3.3"/><rect x="368.95" y="208.67" width="5.1" height="3.3"/><rect x="368.95" y="203.74" width="5.1" height="3.3"/><rect x="368.95" y="198.81" width="5.1" height="3.3"/><rect x="368.95" y="193.88" width="5.1" height="3.3"/><rect x="368.95" y="188.95" width="5.1" height="3.3"/><rect x="368.95" y="184.02" width="5.1" height="3.3"/><rect x="368.95" y="179.09" width="5.1" height="3.3"/><rect x="368.95" y="174.16" width="5.1" height="3.3"/><rect x="368.95" y="169.23" width="5.1" height="3.3"/><rect x="368.95" y="164.30" width="5.1" height="3.3"/><rect x="368.95" y="159.37" width="5.1" height="3.3"/><rect x="368.95" y="154.44" width="5.1" height="3.3"/><rect x="368.95" y="149.51" width="5.1" height="3.3"/><rect x="368.95" y="144.58" width="5.1" height="3.3"/><rect x="368.95" y="139.65" width="5.1" height="3.3"/><rect x="368.95" y="134.72" width="5.1" height="3.3"/><rect x="368.95" y="129.79" width="5.1" height="3.3"/><rect x="368.95" y="124.86" width="5.1" height="3.3"/><rect x="368.95" y="119.93" width="5.1" height="3.3"/><rect x="368.95" y="115.00" width="5.1" height="3.3"/><rect x="368.95" y="110.07" width="5.1" height="3.3"/><rect x="368.95" y="105.14" width="5.1" height="3.3"/><rect x="375.53" y="386.15" width="5.1" height="3.3"/><rect x="375.53" y="381.22" width="5.1" height="3.3"/><rect x="375.53" y="376.29" width="5.1" height="3.3"/><rect x="375.53" y="371.36" width="5.1" height="3.3"/><rect x="375.53" y="366.43" width="5.1" height="3.3"/><rect x="375.53" y="361.50" width="5.1" height="3.3"/><rect x="375.53" y="356.57" width="5.1" height="3.3"/><rect x="375.53" y="351.64" width="5.1" height="3.3"/><rect x="375.53" y="346.71" width="5.1" height="3.3"/><rect x="375.53" y="341.78" width="5.1" height="3.3"/><rect x="375.53" y="336.85" width="5.1" height="3.3"/><rect x="375.53" y="331.92" width="5.1" height="3.3"/><rect x="375.53" y="326.99" width="5.1" height="3.3"/><rect x="375.53" y="322.06" width="5.1" height="3.3"/><rect x="375.53" y="317.13" width="5.1" height="3.3"/><rect x="375.53" y="312.20" width="5.1" height="3.3"/><rect x="375.53" y="307.27" width="5.1" height="3.3"/><rect x="375.53" y="302.34" width="5.1" height="3.3"/><rect x="375.53" y="297.41" width="5.1" height="3.3"/><rect x="375.53" y="292.48" width="5.1" height="3.3"/><rect x="375.53" y="287.55" width="5.1" height="3.3"/><rect x="375.53" y="282.62" width="5.1" height="3.3"/><rect x="375.53" y="277.69" width="5.1" height="3.3"/><rect x="375.53" y="272.76" width="5.1" height="3.3"/><rect x="375.53" y="267.83" width="5.1" height="3.3"/><rect x="375.53" y="262.90" width="5.1" height="3.3"/><rect x="375.53" y="257.97" width="5.1" height="3.3"/><rect x="375.53" y="253.04" width="5.1" height="3.3"/><rect x="375.53" y="248.11" width="5.1" height="3.3"/><rect x="375.53" y="243.18" width="5.1" height="3.3"/><rect x="375.53" y="238.25" width="5.1" height="3.3"/><rect x="375.53" y="233.32" width="5.1" height="3.3"/><rect x="375.53" y="228.39" width="5.1" height="3.3"/><rect x="375.53" y="223.46" width="5.1" height="3.3"/><rect x="375.53" y="218.53" width="5.1" height="3.3"/><rect x="375.53" y="213.60" width="5.1" height="3.3"/><rect x="375.53" y="208.67" width="5.1" height="3.3"/><rect x="375.53" y="203.74" width="5.1" height="3.3"/><rect x="375.53" y="198.81" width="5.1" height="3.3"/><rect x="375.53" y="193.88" width="5.1" height="3.3"/><rect x="375.53" y="188.95" width="5.1" height="3.3"/><rect x="375.53" y="184.02" width="5.1" height="3.3"/><rect x="375.53" y="179.09" width="5.1" height="3.3"/><rect x="375.53" y="174.16" width="5.1" height="3.3"/><rect x="375.53" y="169.23" width="5.1" height="3.3"/><rect x="375.53" y="164.30" width="5.1" height="3.3"/><rect x="375.53" y="159.37" width="5.1" height="3.3"/><rect x="375.53" y="154.44" width="5.1" height="3.3"/><rect x="375.53" y="149.51" width="5.1" height="3.3"/><rect x="375.53" y="144.58" width="5.1" height="3.3"/><rect x="375.53" y="139.65" width="5.1" height="3.3"/><rect x="375.53" y="134.72" width="5.1" height="3.3"/><rect x="375.53" y="129.79" width="5.1" height="3.3"/><rect x="375.53" y="124.86" width="5.1" height="3.3"/><rect x="375.53" y="119.93" width="5.1" height="3.3"/><rect x="375.53" y="115.00" width="5.1" height="3.3"/><rect x="375.53" y="110.07" width="5.1" height="3.3"/><rect x="375.53" y="105.14" width="5.1" height="3.3"/><rect x="375.53" y="100.21" width="5.1" height="3.3"/><rect x="375.53" y="95.28" width="5.1" height="3.3"/><rect x="375.53" y="90.35" width="5.1" height="3.3"/><rect x="375.53" y="85.42" width="5.1" height="3.3"/><rect x="375.53" y="80.49" width="5.1" height="3.3"/><rect x="375.53" y="75.56" width="5.1" height="3.3"/><rect x="375.53" y="70.63" width="5.1" height="3.3"/><rect x="375.53" y="65.70" width="5.1" height="3.3"/><rect x="375.53" y="60.77" width="5.1" height="3.3"/><rect x="375.53" y="55.84" width="5.1" height="3.3"/><rect x="375.53" y="50.91" width="5.1" height="3.3"/><rect x="382.11" y="386.15" width="5.1" height="3.3"/><rect x="382.11" y="381.22" width="5.1" height="3.3"/><rect x="382.11" y="376.29" width="5.1" height="3.3"/><rect x="382.11" y="371.36" width="5.1" height="3.3"/><rect x="382.11" y="366.43" width="5.1" height="3.3"/><rect x="382.11" y="361.50" width="5.1" height="3.3"/><rect x="382.11" y="356.57" width="5.1" height="3.3"/><rect x="382.11" y="351.64" width="5.1" height="3.3"/><rect x="382.11" y="346.71" width="5.1" height="3.3"/><rect x="382.11" y="341.78" width="5.1" height="3.3"/><rect x="382.11" y="336.85" width="5.1" height="3.3"/><rect x="382.11" y="331.92" width="5.1" height="3.3"/><rect x="382.11" y="326.99" width="5.1" height="3.3"/><rect x="382.11" y="322.06" width="5.1" height="3.3"/><rect x="382.11" y="317.13" width="5.1" height="3.3"/><rect x="382.11" y="312.20" width="5.1" height="3.3"/><rect x="382.11" y="307.27" width="5.1" height="3.3"/><rect x="382.11" y="302.34" width="5.1" height="3.3"/><rect x="382.11" y="297.41" width="5.1" height="3.3"/><rect x="382.11" y="292.48" width="5.1" height="3.3"/><rect x="382.11" y="287.55" width="5.1" height="3.3"/><rect x="382.11" y="282.62" width="5.1" height="3.3"/><rect x="382.11" y="277.69" width="5.1" height="3.3"/><rect x="382.11" y="272.76" width="5.1" height="3.3"/><rect x="382.11" y="267.83" width="5.1" height="3.3"/><rect x="388.70" y="386.15" width="5.1" height="3.3"/><rect x="388.70" y="381.22" width="5.1" height="3.3"/><rect x="388.70" y="376.29" width="5.1" height="3.3"/><rect x="388.70" y="371.36" width="5.1" height="3.3"/><rect x="388.70" y="366.43" width="5.1" height="3.3"/><rect x="388.70" y="361.50" width="5.1" height="3.3"/><rect x="388.70" y="356.57" width="5.1" height="3.3"/><rect x="388.70" y="351.64" width="5.1" height="3.3"/><rect x="388.70" y="346.71" width="5.1" height="3.3"/><rect x="388.70" y="341.78" width="5.1" height="3.3"/><rect x="388.70" y="336.85" width="5.1" height="3.3"/><rect x="388.70" y="331.92" width="5.1" height="3.3"/><rect x="388.70" y="326.99" width="5.1" height="3.3"/><rect x="388.70" y="322.06" width="5.1" height="3.3"/><rect x="388.70" y="317.13" width="5.1" height="3.3"/><rect x="388.70" y="312.20" width="5.1" height="3.3"/><rect x="388.70" y="307.27" width="5.1" height="3.3"/><rect x="395.28" y="386.15" width="5.1" height="3.3"/><rect x="395.28" y="381.22" width="5.1" height="3.3"/><rect x="395.28" y="376.29" width="5.1" height="3.3"/><rect x="395.28" y="371.36" width="5.1" height="3.3"/><rect x="395.28" y="366.43" width="5.1" height="3.3"/><rect x="395.28" y="361.50" width="5.1" height="3.3"/><rect x="395.28" y="356.57" width="5.1" height="3.3"/><rect x="395.28" y="351.64" width="5.1" height="3.3"/><rect x="395.28" y="346.71" width="5.1" height="3.3"/><rect x="395.28" y="341.78" width="5.1" height="3.3"/><rect x="395.28" y="336.85" width="5.1" height="3.3"/><rect x="395.28" y="331.92" width="5.1" height="3.3"/><rect x="395.28" y="326.99" width="5.1" height="3.3"/><rect x="401.86" y="386.15" width="5.1" height="3.3"/><rect x="401.86" y="381.22" width="5.1" height="3.3"/><rect x="401.86" y="376.29" width="5.1" height="3.3"/><rect x="401.86" y="371.36" width="5.1" height="3.3"/><rect x="401.86" y="366.43" width="5.1" height="3.3"/><rect x="401.86" y="361.50" width="5.1" height="3.3"/><rect x="401.86" y="356.57" width="5.1" height="3.3"/><rect x="401.86" y="351.64" width="5.1" height="3.3"/><rect x="401.86" y="346.71" width="5.1" height="3.3"/><rect x="401.86" y="341.78" width="5.1" height="3.3"/><rect x="401.86" y="336.85" width="5.1" height="3.3"/><rect x="401.86" y="331.92" width="5.1" height="3.3"/><rect x="401.86" y="326.99" width="5.1" height="3.3"/><rect x="408.45" y="386.15" width="5.1" height="3.3"/><rect x="408.45" y="381.22" width="5.1" height="3.3"/><rect x="408.45" y="376.29" width="5.1" height="3.3"/><rect x="408.45" y="371.36" width="5.1" height="3.3"/><rect x="408.45" y="366.43" width="5.1" height="3.3"/><rect x="408.45" y="361.50" width="5.1" height="3.3"/><rect x="408.45" y="356.57" width="5.1" height="3.3"/><rect x="408.45" y="351.64" width="5.1" height="3.3"/><rect x="408.45" y="346.71" width="5.1" height="3.3"/><rect x="408.45" y="341.78" width="5.1" height="3.3"/><rect x="408.45" y="336.85" width="5.1" height="3.3"/><rect x="408.45" y="331.92" width="5.1" height="3.3"/><rect x="408.45" y="326.99" width="5.1" height="3.3"/><rect x="408.45" y="322.06" width="5.1" height="3.3"/><rect x="408.45" y="317.13" width="5.1" height="3.3"/><rect x="408.45" y="312.20" width="5.1" height="3.3"/><rect x="408.45" y="307.27" width="5.1" height="3.3"/><rect x="408.45" y="302.34" width="5.1" height="3.3"/><rect x="415.03" y="386.15" width="5.1" height="3.3"/><rect x="415.03" y="381.22" width="5.1" height="3.3"/><rect x="415.03" y="376.29" width="5.1" height="3.3"/><rect x="415.03" y="371.36" width="5.1" height="3.3"/><rect x="415.03" y="366.43" width="5.1" height="3.3"/><rect x="415.03" y="361.50" width="5.1" height="3.3"/><rect x="415.03" y="356.57" width="5.1" height="3.3"/><rect x="415.03" y="351.64" width="5.1" height="3.3"/><rect x="415.03" y="346.71" width="5.1" height="3.3"/><rect x="415.03" y="341.78" width="5.1" height="3.3"/><rect x="415.03" y="336.85" width="5.1" height="3.3"/><rect x="415.03" y="331.92" width="5.1" height="3.3"/><rect x="415.03" y="326.99" width="5.1" height="3.3"/><rect x="415.03" y="322.06" width="5.1" height="3.3"/><rect x="415.03" y="317.13" width="5.1" height="3.3"/><rect x="415.03" y="312.20" width="5.1" height="3.3"/><rect x="415.03" y="307.27" width="5.1" height="3.3"/><rect x="415.03" y="302.34" width="5.1" height="3.3"/><rect x="415.03" y="297.41" width="5.1" height="3.3"/><rect x="415.03" y="292.48" width="5.1" height="3.3"/><rect x="415.03" y="287.55" width="5.1" height="3.3"/><rect x="415.03" y="282.62" width="5.1" height="3.3"/><rect x="415.03" y="277.69" width="5.1" height="3.3"/><rect x="415.03" y="272.76" width="5.1" height="3.3"/><rect x="415.03" y="267.83" width="5.1" height="3.3"/><rect x="415.03" y="262.90" width="5.1" height="3.3"/><rect x="421.61" y="386.15" width="5.1" height="3.3"/><rect x="421.61" y="381.22" width="5.1" height="3.3"/><rect x="421.61" y="376.29" width="5.1" height="3.3"/><rect x="421.61" y="371.36" width="5.1" height="3.3"/><rect x="421.61" y="366.43" width="5.1" height="3.3"/><rect x="421.61" y="361.50" width="5.1" height="3.3"/><rect x="421.61" y="356.57" width="5.1" height="3.3"/><rect x="421.61" y="351.64" width="5.1" height="3.3"/><rect x="421.61" y="346.71" width="5.1" height="3.3"/><rect x="421.61" y="341.78" width="5.1" height="3.3"/><rect x="421.61" y="336.85" width="5.1" height="3.3"/><rect x="421.61" y="331.92" width="5.1" height="3.3"/><rect x="421.61" y="326.99" width="5.1" height="3.3"/><rect x="421.61" y="322.06" width="5.1" height="3.3"/><rect x="421.61" y="317.13" width="5.1" height="3.3"/><rect x="421.61" y="312.20" width="5.1" height="3.3"/><rect x="421.61" y="307.27" width="5.1" height="3.3"/><rect x="428.20" y="386.15" width="5.1" height="3.3"/><rect x="428.20" y="381.22" width="5.1" height="3.3"/><rect x="428.20" y="376.29" width="5.1" height="3.3"/><rect x="428.20" y="371.36" width="5.1" height="3.3"/><rect x="428.20" y="366.43" width="5.1" height="3.3"/><rect x="428.20" y="361.50" width="5.1" height="3.3"/><rect x="428.20" y="356.57" width="5.1" height="3.3"/><rect x="428.20" y="351.64" width="5.1" height="3.3"/><rect x="428.20" y="346.71" width="5.1" height="3.3"/><rect x="428.20" y="341.78" width="5.1" height="3.3"/><rect x="434.78" y="386.15" width="5.1" height="3.3"/><rect x="434.78" y="381.22" width="5.1" height="3.3"/><rect x="434.78" y="376.29" width="5.1" height="3.3"/><rect x="434.78" y="371.36" width="5.1" height="3.3"/><rect x="434.78" y="366.43" width="5.1" height="3.3"/><rect x="434.78" y="361.50" width="5.1" height="3.3"/><rect x="434.78" y="356.57" width="5.1" height="3.3"/><rect x="434.78" y="351.64" width="5.1" height="3.3"/><rect x="434.78" y="346.71" width="5.1" height="3.3"/><rect x="434.78" y="341.78" width="5.1" height="3.3"/><rect x="434.78" y="336.85" width="5.1" height="3.3"/><rect x="434.78" y="331.92" width="5.1" height="3.3"/><rect x="434.78" y="326.99" width="5.1" height="3.3"/><rect x="441.36" y="386.15" width="5.1" height="3.3"/><rect x="441.36" y="381.22" width="5.1" height="3.3"/><rect x="441.36" y="376.29" width="5.1" height="3.3"/><rect x="441.36" y="371.36" width="5.1" height="3.3"/><rect x="441.36" y="366.43" width="5.1" height="3.3"/><rect x="441.36" y="361.50" width="5.1" height="3.3"/><rect x="441.36" y="356.57" width="5.1" height="3.3"/><rect x="441.36" y="351.64" width="5.1" height="3.3"/><rect x="441.36" y="346.71" width="5.1" height="3.3"/><rect x="441.36" y="341.78" width="5.1" height="3.3"/><rect x="441.36" y="336.85" width="5.1" height="3.3"/><rect x="441.36" y="331.92" width="5.1" height="3.3"/><rect x="441.36" y="326.99" width="5.1" height="3.3"/><rect x="441.36" y="322.06" width="5.1" height="3.3"/><rect x="447.94" y="386.15" width="5.1" height="3.3"/><rect x="447.94" y="381.22" width="5.1" height="3.3"/><rect x="447.94" y="376.29" width="5.1" height="3.3"/><rect x="447.94" y="371.36" width="5.1" height="3.3"/><rect x="447.94" y="366.43" width="5.1" height="3.3"/><rect x="447.94" y="361.50" width="5.1" height="3.3"/><rect x="447.94" y="356.57" width="5.1" height="3.3"/><rect x="447.94" y="351.64" width="5.1" height="3.3"/><rect x="447.94" y="346.71" width="5.1" height="3.3"/><rect x="447.94" y="341.78" width="5.1" height="3.3"/><rect x="447.94" y="336.85" width="5.1" height="3.3"/><rect x="447.94" y="331.92" width="5.1" height="3.3"/><rect x="454.53" y="386.15" width="5.1" height="3.3"/><rect x="454.53" y="381.22" width="5.1" height="3.3"/><rect x="454.53" y="376.29" width="5.1" height="3.3"/><rect x="454.53" y="371.36" width="5.1" height="3.3"/><rect x="454.53" y="366.43" width="5.1" height="3.3"/><rect x="454.53" y="361.50" width="5.1" height="3.3"/><rect x="454.53" y="356.57" width="5.1" height="3.3"/><rect x="454.53" y="351.64" width="5.1" height="3.3"/><rect x="454.53" y="346.71" width="5.1" height="3.3"/><rect x="454.53" y="341.78" width="5.1" height="3.3"/><rect x="454.53" y="336.85" width="5.1" height="3.3"/><rect x="454.53" y="331.92" width="5.1" height="3.3"/><rect x="454.53" y="326.99" width="5.1" height="3.3"/><rect x="454.53" y="322.06" width="5.1" height="3.3"/><rect x="454.53" y="317.13" width="5.1" height="3.3"/><rect x="454.53" y="312.20" width="5.1" height="3.3"/><rect x="454.53" y="307.27" width="5.1" height="3.3"/><rect x="454.53" y="302.34" width="5.1" height="3.3"/><rect x="454.53" y="297.41" width="5.1" height="3.3"/><rect x="454.53" y="292.48" width="5.1" height="3.3"/><rect x="454.53" y="287.55" width="5.1" height="3.3"/><rect x="454.53" y="282.62" width="5.1" height="3.3"/><rect x="454.53" y="277.69" width="5.1" height="3.3"/><rect x="454.53" y="272.76" width="5.1" height="3.3"/><rect x="454.53" y="267.83" width="5.1" height="3.3"/><rect x="454.53" y="262.90" width="5.1" height="3.3"/><rect x="454.53" y="257.97" width="5.1" height="3.3"/><rect x="454.53" y="253.04" width="5.1" height="3.3"/><rect x="454.53" y="248.11" width="5.1" height="3.3"/><rect x="454.53" y="243.18" width="5.1" height="3.3"/><rect x="454.53" y="238.25" width="5.1" height="3.3"/><rect x="454.53" y="233.32" width="5.1" height="3.3"/><rect x="454.53" y="228.39" width="5.1" height="3.3"/><rect x="454.53" y="223.46" width="5.1" height="3.3"/><rect x="454.53" y="218.53" width="5.1" height="3.3"/><rect x="454.53" y="213.60" width="5.1" height="3.3"/><rect x="454.53" y="208.67" width="5.1" height="3.3"/><rect x="454.53" y="203.74" width="5.1" height="3.3"/><rect x="454.53" y="198.81" width="5.1" height="3.3"/><rect x="454.53" y="193.88" width="5.1" height="3.3"/><rect x="454.53" y="188.95" width="5.1" height="3.3"/><rect x="454.53" y="184.02" width="5.1" height="3.3"/><rect x="454.53" y="179.09" width="5.1" height="3.3"/><rect x="454.53" y="174.16" width="5.1" height="3.3"/><rect x="454.53" y="169.23" width="5.1" height="3.3"/><rect x="454.53" y="164.30" width="5.1" height="3.3"/><rect x="454.53" y="159.37" width="5.1" height="3.3"/><rect x="454.53" y="154.44" width="5.1" height="3.3"/><rect x="454.53" y="149.51" width="5.1" height="3.3"/><rect x="454.53" y="144.58" width="5.1" height="3.3"/><rect x="454.53" y="139.65" width="5.1" height="3.3"/><rect x="454.53" y="134.72" width="5.1" height="3.3"/><rect x="454.53" y="129.79" width="5.1" height="3.3"/><rect x="454.53" y="124.86" width="5.1" height="3.3"/><rect x="454.53" y="119.93" width="5.1" height="3.3"/><rect x="454.53" y="115.00" width="5.1" height="3.3"/><rect x="454.53" y="110.07" width="5.1" height="3.3"/><rect x="454.53" y="105.14" width="5.1" height="3.3"/><rect x="454.53" y="100.21" width="5.1" height="3.3"/><rect x="454.53" y="95.28" width="5.1" height="3.3"/><rect x="454.53" y="90.35" width="5.1" height="3.3"/><rect x="454.53" y="85.42" width="5.1" height="3.3"/><rect x="454.53" y="80.49" width="5.1" height="3.3"/><rect x="454.53" y="75.56" width="5.1" height="3.3"/><rect x="454.53" y="70.63" width="5.1" height="3.3"/><rect x="461.11" y="386.15" width="5.1" height="3.3"/><rect x="461.11" y="381.22" width="5.1" height="3.3"/><rect x="461.11" y="376.29" width="5.1" height="3.3"/><rect x="461.11" y="371.36" width="5.1" height="3.3"/><rect x="461.11" y="366.43" width="5.1" height="3.3"/><rect x="461.11" y="361.50" width="5.1" height="3.3"/><rect x="461.11" y="356.57" width="5.1" height="3.3"/><rect x="461.11" y="351.64" width="5.1" height="3.3"/><rect x="461.11" y="346.71" width="5.1" height="3.3"/><rect x="461.11" y="341.78" width="5.1" height="3.3"/><rect x="461.11" y="336.85" width="5.1" height="3.3"/><rect x="461.11" y="331.92" width="5.1" height="3.3"/><rect x="461.11" y="326.99" width="5.1" height="3.3"/><rect x="461.11" y="322.06" width="5.1" height="3.3"/><rect x="461.11" y="317.13" width="5.1" height="3.3"/><rect x="461.11" y="312.20" width="5.1" height="3.3"/><rect x="461.11" y="307.27" width="5.1" height="3.3"/><rect x="461.11" y="302.34" width="5.1" height="3.3"/><rect x="461.11" y="297.41" width="5.1" height="3.3"/><rect x="461.11" y="292.48" width="5.1" height="3.3"/><rect x="461.11" y="287.55" width="5.1" height="3.3"/><rect x="461.11" y="282.62" width="5.1" height="3.3"/><rect x="461.11" y="277.69" width="5.1" height="3.3"/><rect x="461.11" y="272.76" width="5.1" height="3.3"/><rect x="461.11" y="267.83" width="5.1" height="3.3"/><rect x="461.11" y="262.90" width="5.1" height="3.3"/><rect x="461.11" y="257.97" width="5.1" height="3.3"/><rect x="461.11" y="253.04" width="5.1" height="3.3"/><rect x="461.11" y="248.11" width="5.1" height="3.3"/><rect x="461.11" y="243.18" width="5.1" height="3.3"/><rect x="461.11" y="238.25" width="5.1" height="3.3"/><rect x="461.11" y="233.32" width="5.1" height="3.3"/><rect x="461.11" y="228.39" width="5.1" height="3.3"/><rect x="461.11" y="223.46" width="5.1" height="3.3"/><rect x="461.11" y="218.53" width="5.1" height="3.3"/><rect x="461.11" y="213.60" width="5.1" height="3.3"/><rect x="461.11" y="208.67" width="5.1" height="3.3"/><rect x="461.11" y="203.74" width="5.1" height="3.3"/><rect x="461.11" y="198.81" width="5.1" height="3.3"/><rect x="461.11" y="193.88" width="5.1" height="3.3"/><rect x="461.11" y="188.95" width="5.1" height="3.3"/><rect x="461.11" y="184.02" width="5.1" height="3.3"/><rect x="461.11" y="179.09" width="5.1" height="3.3"/><rect x="461.11" y="174.16" width="5.1" height="3.3"/><rect x="461.11" y="169.23" width="5.1" height="3.3"/><rect x="461.11" y="164.30" width="5.1" height="3.3"/><rect x="461.11" y="159.37" width="5.1" height="3.3"/><rect x="461.11" y="154.44" width="5.1" height="3.3"/><rect x="461.11" y="149.51" width="5.1" height="3.3"/><rect x="461.11" y="144.58" width="5.1" height="3.3"/><rect x="461.11" y="139.65" width="5.1" height="3.3"/><rect x="461.11" y="134.72" width="5.1" height="3.3"/><rect x="461.11" y="129.79" width="5.1" height="3.3"/><rect x="461.11" y="124.86" width="5.1" height="3.3"/><rect x="461.11" y="119.93" width="5.1" height="3.3"/><rect x="461.11" y="115.00" width="5.1" height="3.3"/><rect x="461.11" y="110.07" width="5.1" height="3.3"/><rect x="461.11" y="105.14" width="5.1" height="3.3"/><rect x="461.11" y="100.21" width="5.1" height="3.3"/><rect x="461.11" y="95.28" width="5.1" height="3.3"/><rect x="461.11" y="90.35" width="5.1" height="3.3"/><rect x="461.11" y="85.42" width="5.1" height="3.3"/><rect x="461.11" y="80.49" width="5.1" height="3.3"/><rect x="461.11" y="75.56" width="5.1" height="3.3"/><rect x="461.11" y="70.63" width="5.1" height="3.3"/><rect x="461.11" y="65.70" width="5.1" height="3.3"/><rect x="461.11" y="60.77" width="5.1" height="3.3"/><rect x="461.11" y="55.84" width="5.1" height="3.3"/><rect x="461.11" y="50.91" width="5.1" height="3.3"/><rect x="461.11" y="45.98" width="5.1" height="3.3"/><rect x="461.11" y="41.05" width="5.1" height="3.3"/><rect x="461.11" y="36.12" width="5.1" height="3.3"/><rect x="461.11" y="31.19" width="5.1" height="3.3"/><rect x="467.69" y="386.15" width="5.1" height="3.3"/><rect x="467.69" y="381.22" width="5.1" height="3.3"/><rect x="467.69" y="376.29" width="5.1" height="3.3"/><rect x="467.69" y="371.36" width="5.1" height="3.3"/><rect x="467.69" y="366.43" width="5.1" height="3.3"/><rect x="467.69" y="361.50" width="5.1" height="3.3"/><rect x="467.69" y="356.57" width="5.1" height="3.3"/><rect x="467.69" y="351.64" width="5.1" height="3.3"/><rect x="467.69" y="346.71" width="5.1" height="3.3"/><rect x="467.69" y="341.78" width="5.1" height="3.3"/><rect x="467.69" y="336.85" width="5.1" height="3.3"/><rect x="467.69" y="331.92" width="5.1" height="3.3"/><rect x="467.69" y="326.99" width="5.1" height="3.3"/><rect x="467.69" y="322.06" width="5.1" height="3.3"/><rect x="467.69" y="317.13" width="5.1" height="3.3"/><rect x="467.69" y="312.20" width="5.1" height="3.3"/><rect x="467.69" y="307.27" width="5.1" height="3.3"/><rect x="467.69" y="302.34" width="5.1" height="3.3"/><rect x="467.69" y="297.41" width="5.1" height="3.3"/><rect x="467.69" y="292.48" width="5.1" height="3.3"/><rect x="467.69" y="287.55" width="5.1" height="3.3"/><rect x="467.69" y="282.62" width="5.1" height="3.3"/><rect x="467.69" y="277.69" width="5.1" height="3.3"/><rect x="467.69" y="272.76" width="5.1" height="3.3"/><rect x="467.69" y="267.83" width="5.1" height="3.3"/><rect x="467.69" y="262.90" width="5.1" height="3.3"/><rect x="467.69" y="257.97" width="5.1" height="3.3"/><rect x="467.69" y="253.04" width="5.1" height="3.3"/><rect x="467.69" y="248.11" width="5.1" height="3.3"/><rect x="467.69" y="243.18" width="5.1" height="3.3"/><rect x="467.69" y="238.25" width="5.1" height="3.3"/><rect x="467.69" y="233.32" width="5.1" height="3.3"/><rect x="467.69" y="228.39" width="5.1" height="3.3"/><rect x="467.69" y="223.46" width="5.1" height="3.3"/><rect x="467.69" y="218.53" width="5.1" height="3.3"/><rect x="467.69" y="213.60" width="5.1" height="3.3"/><rect x="467.69" y="208.67" width="5.1" height="3.3"/><rect x="467.69" y="203.74" width="5.1" height="3.3"/><rect x="467.69" y="198.81" width="5.1" height="3.3"/><rect x="467.69" y="193.88" width="5.1" height="3.3"/><rect x="467.69" y="188.95" width="5.1" height="3.3"/><rect x="467.69" y="184.02" width="5.1" height="3.3"/><rect x="467.69" y="179.09" width="5.1" height="3.3"/><rect x="467.69" y="174.16" width="5.1" height="3.3"/><rect x="467.69" y="169.23" width="5.1" height="3.3"/><rect x="467.69" y="164.30" width="5.1" height="3.3"/><rect x="467.69" y="159.37" width="5.1" height="3.3"/><rect x="467.69" y="154.44" width="5.1" height="3.3"/><rect x="467.69" y="149.51" width="5.1" height="3.3"/><rect x="467.69" y="144.58" width="5.1" height="3.3"/><rect x="467.69" y="139.65" width="5.1" height="3.3"/><rect x="467.69" y="134.72" width="5.1" height="3.3"/><rect x="467.69" y="129.79" width="5.1" height="3.3"/><rect x="467.69" y="124.86" width="5.1" height="3.3"/><rect x="467.69" y="119.93" width="5.1" height="3.3"/><rect x="467.69" y="115.00" width="5.1" height="3.3"/><rect x="467.69" y="110.07" width="5.1" height="3.3"/><rect x="467.69" y="105.14" width="5.1" height="3.3"/><rect x="467.69" y="100.21" width="5.1" height="3.3"/><rect x="467.69" y="95.28" width="5.1" height="3.3"/><rect x="467.69" y="90.35" width="5.1" height="3.3"/><rect x="467.69" y="85.42" width="5.1" height="3.3"/><rect x="467.69" y="80.49" width="5.1" height="3.3"/><rect x="467.69" y="75.56" width="5.1" height="3.3"/><rect x="467.69" y="70.63" width="5.1" height="3.3"/><rect x="467.69" y="65.70" width="5.1" height="3.3"/><rect x="467.69" y="60.77" width="5.1" height="3.3"/><rect x="467.69" y="55.84" width="5.1" height="3.3"/><rect x="467.69" y="50.91" width="5.1" height="3.3"/><rect x="467.69" y="45.98" width="5.1" height="3.3"/><rect x="467.69" y="41.05" width="5.1" height="3.3"/><rect x="467.69" y="36.12" width="5.1" height="3.3"/></g></svg>
<div class="t" style='left:265.60px;top:916.49px;font-size:18.5px;color:#4B4B4B;font-weight:400;font-family:"Liberation Sans";transform:scaleX(1.0083)'>GPU History</div>
<div class="t" style='left:92.90px;top:963.71px;font-size:24.2px;color:#FFFFFF;font-weight:400;font-family:"Liberation Sans";transform:scaleX(0.9948)'>Apple M2 (Built-In)</div>
<svg class="abs" style="left:0;top:1375px" width="1836" height="20" viewBox="0 1375 1836 20">
  <path d="M0,1395 V1388.8 L5.2,1395 Z" fill="#25282B"/>
  <path d="M1836,1395 V1391.3 L1832.6,1395 Z" fill="#25282B"/>
</svg>
</body></html>
